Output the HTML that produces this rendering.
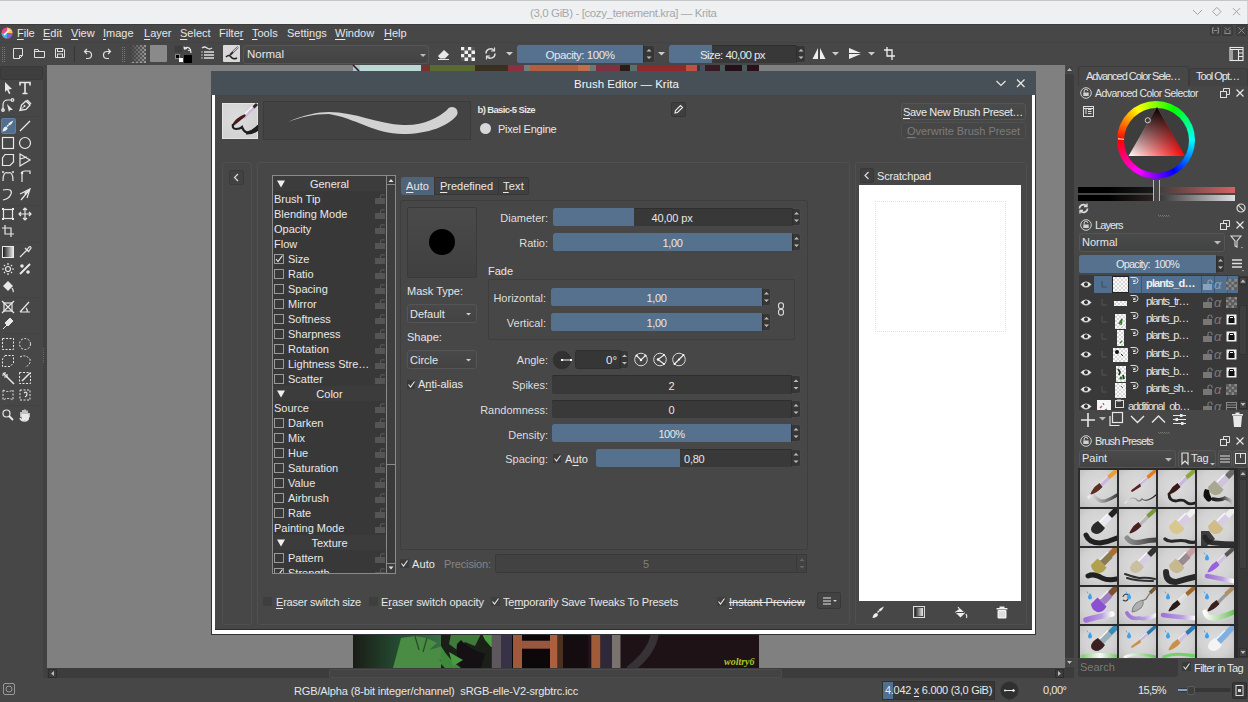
<!DOCTYPE html>
<html><head><meta charset="utf-8"><style>
*{box-sizing:border-box;margin:0;padding:0}
html,body{width:1248px;height:702px;overflow:hidden;background:#3d3d3d;font-family:"Liberation Sans",sans-serif;font-size:11px;color:#d8d8d8}
.a{position:absolute}
.t{position:absolute;white-space:nowrap;line-height:16px}
u{text-decoration:underline;text-underline-offset:1.5px;text-decoration-thickness:1px}
svg{position:absolute;overflow:visible}
svg.clip{overflow:hidden}
</style></head><body>
<div class="a" style="left:0px;top:0px;width:1248px;height:24px;background:#eff0f1;border-top:1px solid #c4c6c8"></div>
<div class="t" style="left:530px;top:4.5px;font-size:11.5px;letter-spacing:-0.380px;color:#a6a8aa">(3,0 GiB) - [cozy_tenement.kra] — Krita</div>
<svg style="left:1190px;top:6px" width="58" height="14" viewBox="0 0 58 14" fill="none" stroke="#a2a4a6" stroke-width="1"><path d="M3 4 L7.5 8.5 L12 4"/><path d="M26.8 1.4 L31 5.6 L26.8 9.8 L22.6 5.6 Z"/><path d="M43 2.2 L50 9.2 M50 2.2 L43 9.2"/></svg>
<div class="a" style="left:1247px;top:1px;width:1px;height:23px;background:#d0d2d4"></div>
<div class="a" style="left:0px;top:24px;width:1248px;height:18px;background:#474747;border-top:1px solid #3c3c3c"></div>
<div class="a" style="left:0px;top:42px;width:1248px;height:23px;background:#474747;border-top:1px solid #434343"></div>
<div class="t" style="left:17px;top:25px;color:#e6e6e6"><u>F</u>ile</div>
<div class="t" style="left:43px;top:25px;color:#e6e6e6"><u>E</u>dit</div>
<div class="t" style="left:71px;top:25px;color:#e6e6e6"><u>V</u>iew</div>
<div class="t" style="left:103px;top:25px;color:#e6e6e6"><u>I</u>mage</div>
<div class="t" style="left:144px;top:25px;color:#e6e6e6"><u>L</u>ayer</div>
<div class="t" style="left:180px;top:25px;color:#e6e6e6"><u>S</u>elect</div>
<div class="t" style="left:219px;top:25px;color:#e6e6e6">Filte<u>r</u></div>
<div class="t" style="left:252px;top:25px;color:#e6e6e6"><u>T</u>ools</div>
<div class="t" style="left:287px;top:25px;color:#e6e6e6">Setti<u>n</u>gs</div>
<div class="t" style="left:335px;top:25px;color:#e6e6e6"><u>W</u>indow</div>
<div class="t" style="left:384px;top:25px;color:#e6e6e6"><u>H</u>elp</div>
<svg style="left:1px;top:27px" width="12" height="12" viewBox="0 0 12 12"><circle cx="6" cy="6" r="5.5" fill="#e84c8a"/><path d="M6 .5 A5.5 5.5 0 0 1 11.5 6 L6 6Z" fill="#f7c94a"/><path d="M.5 6 A5.5 5.5 0 0 0 6 11.5 L6 6Z" fill="#38b6e8"/><path d="M11.5 6 A5.5 5.5 0 0 1 6 11.5 L6 6Z" fill="#8a5cd0"/><path d="M3 8 L8 3" stroke="#fff" stroke-width="1.5"/></svg>
<div class="a" style="left:47px;top:65px;width:1018px;height:603px;background:#808080"></div>
<svg style="left:2px;top:47px" width="3" height="16" viewBox="0 0 3 16" ><rect x="0" y="0" width="1" height="1" fill="#777"/><rect x="2" y="0" width="1" height="1" fill="#777"/><rect x="0" y="2" width="1" height="1" fill="#777"/><rect x="2" y="2" width="1" height="1" fill="#777"/><rect x="0" y="4" width="1" height="1" fill="#777"/><rect x="2" y="4" width="1" height="1" fill="#777"/><rect x="0" y="6" width="1" height="1" fill="#777"/><rect x="2" y="6" width="1" height="1" fill="#777"/><rect x="0" y="8" width="1" height="1" fill="#777"/><rect x="2" y="8" width="1" height="1" fill="#777"/><rect x="0" y="10" width="1" height="1" fill="#777"/><rect x="2" y="10" width="1" height="1" fill="#777"/><rect x="0" y="12" width="1" height="1" fill="#777"/><rect x="2" y="12" width="1" height="1" fill="#777"/><rect x="0" y="14" width="1" height="1" fill="#777"/><rect x="2" y="14" width="1" height="1" fill="#777"/></svg>
<svg style="left:122px;top:47px" width="3" height="16" viewBox="0 0 3 16" ><rect x="0" y="0" width="1" height="1" fill="#777"/><rect x="2" y="0" width="1" height="1" fill="#777"/><rect x="0" y="2" width="1" height="1" fill="#777"/><rect x="2" y="2" width="1" height="1" fill="#777"/><rect x="0" y="4" width="1" height="1" fill="#777"/><rect x="2" y="4" width="1" height="1" fill="#777"/><rect x="0" y="6" width="1" height="1" fill="#777"/><rect x="2" y="6" width="1" height="1" fill="#777"/><rect x="0" y="8" width="1" height="1" fill="#777"/><rect x="2" y="8" width="1" height="1" fill="#777"/><rect x="0" y="10" width="1" height="1" fill="#777"/><rect x="2" y="10" width="1" height="1" fill="#777"/><rect x="0" y="12" width="1" height="1" fill="#777"/><rect x="2" y="12" width="1" height="1" fill="#777"/><rect x="0" y="14" width="1" height="1" fill="#777"/><rect x="2" y="14" width="1" height="1" fill="#777"/></svg>
<svg style="left:12px;top:47px" width="12" height="13" viewBox="0 0 12 13" ><path d="M1.5 1.5 H10.5 V8.5 L7.5 11.5 H1.5 Z M10.5 8.5 H7.5 V11.5" fill="none" stroke="#e0e0e0"/></svg>
<svg style="left:33px;top:47px" width="13" height="12" viewBox="0 0 13 12" ><path d="M1.5 2.5 V10.5 H11.5 V4.5 H6 L5 2.5 Z" fill="none" stroke="#e0e0e0"/><path d="M1.5 4.5 H11.5" stroke="#e0e0e0"/></svg>
<svg style="left:54px;top:47px" width="12" height="12" viewBox="0 0 12 12" ><path d="M1.5 1.5 H9 L10.5 3 V10.5 H1.5 Z" fill="none" stroke="#e0e0e0"/><rect x="3.5" y="1.5" width="5" height="3" fill="none" stroke="#e0e0e0"/><rect x="3.5" y="7" width="5" height="3.5" fill="none" stroke="#e0e0e0"/></svg>
<div class="a" style="left:74px;top:46px;width:1px;height:16px;background:#353535"></div>
<svg style="left:82px;top:47px" width="11" height="13" viewBox="0 0 11 13" ><path d="M3 4.5 H6 A3.5 3.5 0 0 1 6 11.5 H4" fill="none" stroke="#e0e0e0" stroke-width="1.2"/><path d="M5 2 L2.5 4.5 L5 7" fill="none" stroke="#e0e0e0" stroke-width="1.2"/></svg>
<svg style="left:102px;top:47px" width="11" height="13" viewBox="0 0 11 13" ><path d="M8 4.5 H5 A3.5 3.5 0 0 0 5 11.5 H7" fill="none" stroke="#e0e0e0" stroke-width="1.2"/><path d="M6 2 L8.5 4.5 L6 7" fill="none" stroke="#e0e0e0" stroke-width="1.2"/></svg>
<svg style="left:130px;top:45px" width="16" height="17" viewBox="0 0 16 17" ><defs><linearGradient id="cg" x1="0" x2="1"><stop offset="0" stop-color="#3d3d3d" stop-opacity=".9"/><stop offset="1" stop-color="#3d3d3d" stop-opacity="0"/></linearGradient></defs><rect x="0" y="0" width="2" height="2" fill="#5a5a5a"/><rect x="0" y="2" width="2" height="2" fill="#9a9a9a"/><rect x="0" y="4" width="2" height="2" fill="#5a5a5a"/><rect x="0" y="6" width="2" height="2" fill="#9a9a9a"/><rect x="0" y="8" width="2" height="2" fill="#5a5a5a"/><rect x="0" y="10" width="2" height="2" fill="#9a9a9a"/><rect x="0" y="12" width="2" height="2" fill="#5a5a5a"/><rect x="0" y="14" width="2" height="2" fill="#9a9a9a"/><rect x="0" y="16" width="2" height="2" fill="#5a5a5a"/><rect x="2" y="0" width="2" height="2" fill="#9a9a9a"/><rect x="2" y="2" width="2" height="2" fill="#5a5a5a"/><rect x="2" y="4" width="2" height="2" fill="#9a9a9a"/><rect x="2" y="6" width="2" height="2" fill="#5a5a5a"/><rect x="2" y="8" width="2" height="2" fill="#9a9a9a"/><rect x="2" y="10" width="2" height="2" fill="#5a5a5a"/><rect x="2" y="12" width="2" height="2" fill="#9a9a9a"/><rect x="2" y="14" width="2" height="2" fill="#5a5a5a"/><rect x="2" y="16" width="2" height="2" fill="#9a9a9a"/><rect x="4" y="0" width="2" height="2" fill="#5a5a5a"/><rect x="4" y="2" width="2" height="2" fill="#9a9a9a"/><rect x="4" y="4" width="2" height="2" fill="#5a5a5a"/><rect x="4" y="6" width="2" height="2" fill="#9a9a9a"/><rect x="4" y="8" width="2" height="2" fill="#5a5a5a"/><rect x="4" y="10" width="2" height="2" fill="#9a9a9a"/><rect x="4" y="12" width="2" height="2" fill="#5a5a5a"/><rect x="4" y="14" width="2" height="2" fill="#9a9a9a"/><rect x="4" y="16" width="2" height="2" fill="#5a5a5a"/><rect x="6" y="0" width="2" height="2" fill="#9a9a9a"/><rect x="6" y="2" width="2" height="2" fill="#5a5a5a"/><rect x="6" y="4" width="2" height="2" fill="#9a9a9a"/><rect x="6" y="6" width="2" height="2" fill="#5a5a5a"/><rect x="6" y="8" width="2" height="2" fill="#9a9a9a"/><rect x="6" y="10" width="2" height="2" fill="#5a5a5a"/><rect x="6" y="12" width="2" height="2" fill="#9a9a9a"/><rect x="6" y="14" width="2" height="2" fill="#5a5a5a"/><rect x="6" y="16" width="2" height="2" fill="#9a9a9a"/><rect x="8" y="0" width="2" height="2" fill="#5a5a5a"/><rect x="8" y="2" width="2" height="2" fill="#9a9a9a"/><rect x="8" y="4" width="2" height="2" fill="#5a5a5a"/><rect x="8" y="6" width="2" height="2" fill="#9a9a9a"/><rect x="8" y="8" width="2" height="2" fill="#5a5a5a"/><rect x="8" y="10" width="2" height="2" fill="#9a9a9a"/><rect x="8" y="12" width="2" height="2" fill="#5a5a5a"/><rect x="8" y="14" width="2" height="2" fill="#9a9a9a"/><rect x="8" y="16" width="2" height="2" fill="#5a5a5a"/><rect x="10" y="0" width="2" height="2" fill="#9a9a9a"/><rect x="10" y="2" width="2" height="2" fill="#5a5a5a"/><rect x="10" y="4" width="2" height="2" fill="#9a9a9a"/><rect x="10" y="6" width="2" height="2" fill="#5a5a5a"/><rect x="10" y="8" width="2" height="2" fill="#9a9a9a"/><rect x="10" y="10" width="2" height="2" fill="#5a5a5a"/><rect x="10" y="12" width="2" height="2" fill="#9a9a9a"/><rect x="10" y="14" width="2" height="2" fill="#5a5a5a"/><rect x="10" y="16" width="2" height="2" fill="#9a9a9a"/><rect x="12" y="0" width="2" height="2" fill="#5a5a5a"/><rect x="12" y="2" width="2" height="2" fill="#9a9a9a"/><rect x="12" y="4" width="2" height="2" fill="#5a5a5a"/><rect x="12" y="6" width="2" height="2" fill="#9a9a9a"/><rect x="12" y="8" width="2" height="2" fill="#5a5a5a"/><rect x="12" y="10" width="2" height="2" fill="#9a9a9a"/><rect x="12" y="12" width="2" height="2" fill="#5a5a5a"/><rect x="12" y="14" width="2" height="2" fill="#9a9a9a"/><rect x="12" y="16" width="2" height="2" fill="#5a5a5a"/><rect x="14" y="0" width="2" height="2" fill="#9a9a9a"/><rect x="14" y="2" width="2" height="2" fill="#5a5a5a"/><rect x="14" y="4" width="2" height="2" fill="#9a9a9a"/><rect x="14" y="6" width="2" height="2" fill="#5a5a5a"/><rect x="14" y="8" width="2" height="2" fill="#9a9a9a"/><rect x="14" y="10" width="2" height="2" fill="#5a5a5a"/><rect x="14" y="12" width="2" height="2" fill="#9a9a9a"/><rect x="14" y="14" width="2" height="2" fill="#5a5a5a"/><rect x="14" y="16" width="2" height="2" fill="#9a9a9a"/><rect width="16" height="17" fill="url(#cg)"/></svg>
<div class="a" style="left:150px;top:45px;width:17px;height:17px;background:#8a8a8a;border-radius:1px"></div>
<div class="a" style="left:174px;top:45px;width:9px;height:8px;background:#3c3c3c;border:1px solid #444"></div>
<div class="a" style="left:184px;top:55px;width:8px;height:8px;background:#000"></div>
<div class="a" style="left:175px;top:54px;width:5px;height:5px;background:#000;border:1px solid #888"></div>
<div class="a" style="left:179px;top:58px;width:4px;height:4px;background:#fff"></div>
<svg style="left:183px;top:45px" width="9" height="9" viewBox="0 0 9 9" ><path d="M1.5 3.5 Q5 1 7.5 4.5 M1 1.5 L1.5 4 L4 3.5 M8 8 L7.5 5 L5 5.5" stroke="#e8e8e8" fill="none" stroke-width="1.2"/></svg>
<svg style="left:201px;top:46px" width="14" height="14" viewBox="0 0 14 14" ><path d="M1 2 Q3.5 0 6 2 T11 2" stroke="#e0e0e0" fill="none" stroke-width="1.3"/><path d="M3 6 H13 M3 9 H13 M3 12 H13" stroke="#e0e0e0" stroke-width="1.3"/><path d="M0.5 6 H1.5 M.5 9 H1.5 M.5 12 H1.5" stroke="#e0e0e0" stroke-width="1.3"/></svg>
<div class="a" style="left:223px;top:45px;width:17px;height:17px;background:#d9d9d9;border-radius:1px"></div>
<svg style="left:223px;top:45px" width="17" height="17" viewBox="0 0 17 17" ><path d="M15 2 L7 10" stroke="#3a2a2a" stroke-width="2"/><path d="M15 2 L10 7" stroke="#c8b8d8" stroke-width="1.2"/><path d="M3 12 Q6 9 8 12 T14 13" stroke="#222" fill="none" stroke-width="1.5"/></svg>
<div class="a" style="left:243px;top:45px;width:186px;height:19px;background:linear-gradient(#4a4a4a,#434343);border:1px solid #555;border-radius:3px"></div>
<div class="t" style="left:247px;top:46px;color:#e6e6e6;font-size:11.5px">Normal</div>
<svg style="left:420px;top:54px" width="6" height="3" viewBox="0 0 6 3" ><path d="M0 0 H6 L3 3Z" fill="#bbb"/></svg>
<svg style="left:437px;top:47px" width="14" height="13" viewBox="0 0 14 13" ><path d="M1 9 L7 3 L12 7.5 L8 11.5 H3 Z" fill="#e8e8e8"/><path d="M1 12.5 H12" stroke="#e8e8e8"/></svg>
<svg style="left:461px;top:47px" width="14" height="14" viewBox="0 0 14 14" ><rect x="0.0" y="0.0" width="3.5" height="3.5" fill="#f0f0f0"/><rect x="0.0" y="3.5" width="3.5" height="3.5" fill="#555"/><rect x="0.0" y="7.0" width="3.5" height="3.5" fill="#f0f0f0"/><rect x="0.0" y="10.5" width="3.5" height="3.5" fill="#555"/><rect x="3.5" y="0.0" width="3.5" height="3.5" fill="#555"/><rect x="3.5" y="3.5" width="3.5" height="3.5" fill="#f0f0f0"/><rect x="3.5" y="7.0" width="3.5" height="3.5" fill="#555"/><rect x="3.5" y="10.5" width="3.5" height="3.5" fill="#f0f0f0"/><rect x="7.0" y="0.0" width="3.5" height="3.5" fill="#f0f0f0"/><rect x="7.0" y="3.5" width="3.5" height="3.5" fill="#555"/><rect x="7.0" y="7.0" width="3.5" height="3.5" fill="#f0f0f0"/><rect x="7.0" y="10.5" width="3.5" height="3.5" fill="#555"/><rect x="10.5" y="0.0" width="3.5" height="3.5" fill="#555"/><rect x="10.5" y="3.5" width="3.5" height="3.5" fill="#f0f0f0"/><rect x="10.5" y="7.0" width="3.5" height="3.5" fill="#555"/><rect x="10.5" y="10.5" width="3.5" height="3.5" fill="#f0f0f0"/></svg>
<svg style="left:484px;top:47px" width="13" height="13" viewBox="0 0 13 13" ><path d="M2 6.5 A4.5 4.5 0 0 1 10 3.5 M11 6.5 A4.5 4.5 0 0 1 3 9.5" stroke="#e0e0e0" fill="none" stroke-width="1.4"/><path d="M10.5 0.5 V4 H7" stroke="#e0e0e0" fill="none" stroke-width="1.2"/><path d="M2.5 12.5 V9 H6" stroke="#e0e0e0" fill="none" stroke-width="1.2"/></svg>
<svg style="left:506px;top:52px" width="7" height="4" viewBox="0 0 7 4" ><path d="M0 0 H7 L3.5 3.5Z" fill="#ccc"/></svg>
<div class="a" style="left:517px;top:45px;width:126px;height:18px;background:#383838;border-radius:2px 0 0 2px;box-shadow:inset 0 1px 0 #2e2e2e"></div>
<div class="a" style="left:517px;top:45px;width:126px;height:18px;background:#56718d;border-radius:2px 0 0 2px"></div>
<div class="t" style="left:517px;top:47.0px;width:126px;text-align:center;color:#e8e8e8;font-size:11.5px;letter-spacing:-0.445px">Opacity: 100%</div>
<div class="a" style="left:643px;top:45px;width:12px;height:18px;background:#363636;border:1px solid #4a4a4a;border-left:1px solid #2e2e2e;border-radius:0 3px 3px 0"></div>
<svg style="left:643px;top:45px" width="12" height="18" viewBox="0 0 12 18" ><path d="M3.5 6.4 L6.0 3.9000000000000004 L8.5 6.4Z" fill="#bdbdbd"/><path d="M3.5 11.600000000000001 L6.0 14.100000000000001 L8.5 11.600000000000001Z" fill="#bdbdbd"/></svg>
<svg style="left:658px;top:52px" width="7" height="4" viewBox="0 0 7 4" ><path d="M0 0 H7 L3.5 3.5Z" fill="#ccc"/></svg>
<div class="a" style="left:669px;top:45px;width:127px;height:18px;background:#383838;border-radius:2px 0 0 2px;box-shadow:inset 0 1px 0 #2e2e2e"></div>
<div class="a" style="left:669px;top:45px;width:43px;height:18px;background:#56718d;border-radius:2px 0 0 2px"></div>
<div class="t" style="left:700px;top:47.0px;color:#e8e8e8;font-size:11.5px;letter-spacing:-0.563px">Size: 40,00 px</div>
<div class="a" style="left:796px;top:45px;width:10px;height:18px;background:#363636;border:1px solid #4a4a4a;border-left:1px solid #2e2e2e;border-radius:0 3px 3px 0"></div>
<svg style="left:796px;top:45px" width="10" height="18" viewBox="0 0 10 18" ><path d="M2.5 6.4 L5.0 3.9000000000000004 L7.5 6.4Z" fill="#bdbdbd"/><path d="M2.5 11.600000000000001 L5.0 14.100000000000001 L7.5 11.600000000000001Z" fill="#bdbdbd"/></svg>
<svg style="left:812px;top:47px" width="14" height="13" viewBox="0 0 14 13" ><path d="M6 1 V12 H0.5 Z M8 1 V12 H13.5 Z" fill="#eee"/></svg>
<svg style="left:832px;top:52px" width="7" height="4" viewBox="0 0 7 4" ><path d="M0 0 H7 L3.5 3.5Z" fill="#ccc"/></svg>
<svg style="left:848px;top:47px" width="14" height="13" viewBox="0 0 14 13" ><path d="M1 1 L13 6 H1 Z M1 7 H13 L1 12Z" fill="#eee"/></svg>
<svg style="left:868px;top:52px" width="7" height="4" viewBox="0 0 7 4" ><path d="M0 0 H7 L3.5 3.5Z" fill="#ccc"/></svg>
<svg style="left:883px;top:46px" width="13" height="15" viewBox="0 0 13 15" ><path d="M4 1 V10 H12 M1 4 H9 V14" stroke="#eee" fill="none" stroke-width="1.3"/></svg>
<svg style="left:1229px;top:46px" width="15" height="15" viewBox="0 0 15 15" ><rect x="1" y="1.5" width="13" height="13" fill="none" stroke="#e8e8e8" stroke-width="1.1"/><path d="M1 3.5 H14 M3 3.5 V14.5 M9.5 3.5 V14.5 M9.5 7 H14 M9.5 10.5 H14" stroke="#e8e8e8" stroke-width="1.1"/></svg>
<div class="a" style="left:1210px;top:25px;width:11px;height:11px;border:1px solid #3a3a3a;border-radius:2px;background:#414141"></div>
<div class="a" style="left:1222px;top:25px;width:11px;height:11px;border:1px solid #3a3a3a;border-radius:2px;background:#414141"></div>
<div class="a" style="left:1236px;top:25px;width:11px;height:11px;border:1px solid #3a3a3a;border-radius:2px;background:#414141"></div>
<svg style="left:1210px;top:25px" width="38" height="11" viewBox="0 0 38 11" ><path d="M2.5 3 V8 M8.5 3 V8 M3.5 5.5 H7.5 M2.5 3 H4 M7 3 H8.5 M2.5 8 H4 M7 8 H8.5" stroke="#8a8a8a"/><path d="M14.5 8.5 H20.5 M15 2.5 L17.5 5 M20 2.5 L17.5 5 M15 5 V8.5 M20 5 V8.5" stroke="#8a8a8a" fill="none"/><path d="M28.5 2.5 L34.5 8.5 M34.5 2.5 L28.5 8.5" stroke="#8a8a8a"/></svg>
<div class="a" style="left:0px;top:65px;width:43px;height:615px;background:#474747"></div>
<div class="a" style="left:43px;top:65px;width:4px;height:615px;background:#414141"></div>
<div class="a" style="left:0px;top:66px;width:43px;height:14px;background:#3e3e3e;border:1px solid #383838;border-radius:2px"></div>
<div class="a" style="left:1px;top:118px;width:15px;height:16px;background:#51708f;border:1px solid #5d7ea0;border-radius:2px"></div>
<svg style="left:0px;top:80px" width="16" height="16" viewBox="-8 -8 16 16"><path d="M-3 -6 L4 1 L0.5 1.5 L2.5 5.5 L1 6 L-1 2 L-3 4 Z" fill="#e8e8e8"/></svg>
<svg style="left:17px;top:80px" width="16" height="16" viewBox="-8 -8 16 16"><path d="M-5 -2.5 V-5.5 H5 V-2.5 M0 -5.5 V5.5 M-2.5 5.5 H2.5" stroke="#e8e8e8" fill="none" stroke-width="1.6"/></svg>
<svg style="left:0px;top:97px" width="16" height="16" viewBox="-8 -8 16 16"><path d="M-5 6 V0 Q-5 -5 0 -5 H4" stroke="#e8e8e8" fill="none" stroke-width="1.2"/><circle cx="4.5" cy="-5" r="1.3" stroke="#e8e8e8" fill="none" stroke-width="1.2"/><circle cx="-5" cy="5" r="1.3" stroke="#e8e8e8" fill="none" stroke-width="1.2"/><path d="M-1 -1 L5 5 L2 5 L1 7Z" fill="#e8e8e8"/></svg>
<svg style="left:17px;top:97px" width="16" height="16" viewBox="-8 -8 16 16"><path d="M-5 5.5 L-3.5 0 L1 -4 L5 0 L1 4.5 Z" fill="none" stroke="#e8e8e8" stroke-width="1.3"/><path d="M-5 5.5 L-1 1.5" stroke="#e8e8e8"/><circle cx="-0.5" cy="1" r="1" fill="#e8e8e8"/><path d="M2 -5 L6 -1" stroke="#e8e8e8" stroke-width="1.5"/></svg>
<svg style="left:17px;top:118px" width="16" height="16" viewBox="-8 -8 16 16"><path d="M-5 5 L5 -5" stroke="#e8e8e8" stroke-width="1.3"/></svg>
<svg style="left:0px;top:135px" width="16" height="16" viewBox="-8 -8 16 16"><rect x="-5.5" y="-5.5" width="11" height="11" stroke="#e8e8e8" fill="none" stroke-width="1.2"/></svg>
<svg style="left:17px;top:135px" width="16" height="16" viewBox="-8 -8 16 16"><circle r="5.5" stroke="#e8e8e8" fill="none" stroke-width="1.2"/></svg>
<svg style="left:0px;top:152px" width="16" height="16" viewBox="-8 -8 16 16"><path d="M-3 -5.5 H5.5 V2 L2 5.5 H-5.5 V-2 Z" stroke="#e8e8e8" fill="none" stroke-width="1.2"/></svg>
<svg style="left:17px;top:152px" width="16" height="16" viewBox="-8 -8 16 16"><path d="M-5 -6 L5 0 L-5 6 Z M-5 -1 L2 -3" stroke="#e8e8e8" fill="none" stroke-width="1.2"/></svg>
<svg style="left:0px;top:168px" width="16" height="16" viewBox="-8 -8 16 16"><path d="M-5 5 Q-5 -5 0 -3 Q5 -5 5 5" stroke="#e8e8e8" fill="none" stroke-width="1.2"/><circle cx="-5" cy="-4" r="1" fill="#e8e8e8"/><circle cx="5" cy="-4" r="1" fill="#e8e8e8"/></svg>
<svg style="left:17px;top:168px" width="16" height="16" viewBox="-8 -8 16 16"><path d="M-3 6 V-3 Q-3 -5 0 -5 H5 V-2" stroke="#e8e8e8" fill="none" stroke-width="1.2"/><circle cx="-3" cy="-3" r="1.3" fill="#e8e8e8"/></svg>
<svg style="left:0px;top:186px" width="16" height="16" viewBox="-8 -8 16 16"><path d="M-5 -4 Q5 -6 3 0 Q1 5 -5 6" stroke="#e8e8e8" fill="none" stroke-width="1.2"/></svg>
<svg style="left:17px;top:186px" width="16" height="16" viewBox="-8 -8 16 16"><path d="M-4 6 L5 -5 M-5 0 L5 -5 L2 4" stroke="#e8e8e8" fill="none" stroke-width="1.2"/><path d="M-1 -1 L3 -4 L1 1Z" fill="#e8e8e8"/></svg>
<svg style="left:0px;top:206px" width="16" height="16" viewBox="-8 -8 16 16"><rect x="-4.5" y="-4.5" width="9" height="9" stroke="#e8e8e8" fill="none" stroke-width="1.2"/><path d="M-6 -6 h2 v2 h-2z M4 -6 h2 v2 h-2z M-6 4 h2 v2 h-2z M4 4 h2 v2 h-2z" fill="#e8e8e8"/></svg>
<svg style="left:17px;top:206px" width="16" height="16" viewBox="-8 -8 16 16"><path d="M0 -6 V6 M-6 0 H6 M-2 -4 L0 -6 L2 -4 M-2 4 L0 6 L2 4 M-4 -2 L-6 0 L-4 2 M4 -2 L6 0 L4 2" stroke="#e8e8e8" fill="none" stroke-width="1.2"/></svg>
<svg style="left:0px;top:223px" width="16" height="16" viewBox="-8 -8 16 16"><path d="M-3 -6 V3 H6 M-6 -3 H3 V6" stroke="#e8e8e8" fill="none" stroke-width="1.2"/></svg>
<svg style="left:0px;top:244px" width="16" height="16" viewBox="-8 -8 16 16"><defs><linearGradient id="gr1"><stop offset="0" stop-color="#111"/><stop offset="1" stop-color="#eee"/></linearGradient></defs><rect x="-5.5" y="-5.5" width="11" height="11" fill="url(#gr1)" stroke="#e8e8e8"/></svg>
<svg style="left:17px;top:244px" width="16" height="16" viewBox="-8 -8 16 16"><path d="M-5 5 L2 -2 M0 -4 L4 0 M2 -2 L4 -5 Q6 -6 6 -4 L4 -1" stroke="#e8e8e8" fill="none" stroke-width="1.2"/></svg>
<svg style="left:0px;top:261px" width="16" height="16" viewBox="-8 -8 16 16"><circle r="2.5" stroke="#e8e8e8" fill="none" stroke-width="1.2"/><path d="M0 -6 V-4 M0 4 V6 M-6 0 H-4 M4 0 H6 M-4 -4 L-3 -3 M3 3 L4 4 M-4 4 L-3 3 M3 -3 L4 -4" stroke="#e8e8e8" fill="none" stroke-width="1.2"/></svg>
<svg style="left:17px;top:261px" width="16" height="16" viewBox="-8 -8 16 16"><path d="M-5 5 L5 -5" stroke="#e8e8e8" stroke-width="2"/><circle cx="-3" cy="-3" r="1.8" fill="#e8e8e8"/><circle cx="3" cy="3" r="1.8" fill="#e8e8e8"/></svg>
<svg style="left:0px;top:278px" width="16" height="16" viewBox="-8 -8 16 16"><path d="M-5 0 L0 -5 L5 0 L0 5Z" fill="#e8e8e8"/><path d="M4 2 Q6 5 5 6" stroke="#e8e8e8" fill="none" stroke-width="1.2"/></svg>
<svg style="left:0px;top:299px" width="16" height="16" viewBox="-8 -8 16 16"><rect x="-4" y="-4" width="8" height="8" stroke="#e8e8e8" fill="none" stroke-width="1.2"/><path d="M-6 -6 L6 6 M6 -6 L-6 6" stroke="#e8e8e8" fill="none" stroke-width="1.2"/></svg>
<svg style="left:17px;top:299px" width="16" height="16" viewBox="-8 -8 16 16"><path d="M-5 5 H5 M-5 5 L4 -5 M1 1 Q3 3 2 5" stroke="#e8e8e8" fill="none" stroke-width="1.2"/></svg>
<svg style="left:0px;top:315px" width="16" height="16" viewBox="-8 -8 16 16"><path d="M-5 6 L-1 2 M-3 0 L2 -5 L5 -2 L0 3 Z" fill="#e8e8e8" stroke="#e8e8e8"/></svg>
<svg style="left:0px;top:336px" width="16" height="16" viewBox="-8 -8 16 16"><rect x="-5.5" y="-5.5" width="11" height="11" stroke="#e8e8e8" fill="none" stroke-dasharray="2 1.5"/></svg>
<svg style="left:17px;top:336px" width="16" height="16" viewBox="-8 -8 16 16"><circle r="5.5" stroke="#e8e8e8" fill="none" stroke-dasharray="2 1.5"/></svg>
<svg style="left:0px;top:353px" width="16" height="16" viewBox="-8 -8 16 16"><path d="M-3 -5.5 H5.5 V2 L2 5.5 H-5.5 V-2 Z" stroke="#e8e8e8" fill="none" stroke-dasharray="2 1.5"/></svg>
<svg style="left:17px;top:353px" width="16" height="16" viewBox="-8 -8 16 16"><path d="M-5 -4 Q0 -7 5 -2 Q6 4 0 6" stroke="#e8e8e8" fill="none" stroke-dasharray="2 1.5"/></svg>
<svg style="left:0px;top:370px" width="16" height="16" viewBox="-8 -8 16 16"><path d="M-5 -5 L6 6" stroke="#e8e8e8" stroke-width="1.5"/><path d="M-4 -1 H-1 V-4 M-3 -6 V-4 M-6 -3 H-4" stroke="#e8e8e8" fill="none" stroke-width="1.2"/></svg>
<svg style="left:17px;top:370px" width="16" height="16" viewBox="-8 -8 16 16"><rect x="-5.5" y="-5.5" width="11" height="11" stroke="#e8e8e8" fill="none" stroke-dasharray="2 1.5"/><path d="M-3 3 L3 -3 L5 -5" stroke="#e8e8e8" stroke-width="1.5"/></svg>
<svg style="left:0px;top:387px" width="16" height="16" viewBox="-8 -8 16 16"><path d="M-5 -5 Q0 -2 5 -5 V5 Q0 2 -5 5Z" stroke="#e8e8e8" fill="none" stroke-dasharray="2 1.5"/></svg>
<svg style="left:17px;top:387px" width="16" height="16" viewBox="-8 -8 16 16"><path d="M-5 -5 H5 V5 H-5Z" stroke="#e8e8e8" fill="none" stroke-dasharray="2 1.5"/><path d="M-1 -2 Q2 -4 2 -1 Q2 1 0 2" stroke="#e8e8e8" fill="none" stroke-width="1.2"/></svg>
<svg style="left:0px;top:407px" width="16" height="16" viewBox="-8 -8 16 16"><circle cx="-1.5" cy="-1.5" r="3.5" stroke="#e8e8e8" fill="none" stroke-width="1.2"/><path d="M1 1 L5 5" stroke="#e8e8e8" stroke-width="2"/></svg>
<svg style="left:17px;top:407px" width="16" height="16" viewBox="-8 -8 16 16"><path d="M-4 2 V-3 M-2 1 V-5 M0 1 V-5.5 M2 1 V-4.5 M4 2 V-2 Q4 6 0 6 Q-4 6 -5 3" stroke="#e8e8e8" stroke-width="1.5" fill="none"/><rect x="-3.5" y="-1" width="7" height="6" fill="#e8e8e8"/></svg>
<svg style="left:0px;top:118px" width="16" height="16" viewBox="0 0 16 16"><path d="M13.5 2.5 Q12 6 9.5 7.5 L8 6 Q10 3.5 13.5 2.5Z" fill="#eee"/><path d="M8.5 7 L7 8.5" stroke="#eee" stroke-width="1.5"/><path d="M2.5 13.5 Q3 9.5 5.5 8.5 Q7.5 8.5 7.5 10.5 Q6.5 13 2.5 13.5Z" fill="#eee"/></svg>
<div class="a" style="left:3px;top:116px;width:36px;height:1px;background:#424242"></div>
<div class="a" style="left:3px;top:205px;width:36px;height:1px;background:#424242"></div>
<div class="a" style="left:3px;top:242px;width:36px;height:1px;background:#424242"></div>
<div class="a" style="left:3px;top:297px;width:36px;height:1px;background:#424242"></div>
<div class="a" style="left:3px;top:333px;width:36px;height:1px;background:#424242"></div>
<div class="a" style="left:3px;top:405px;width:36px;height:1px;background:#424242"></div>
<svg style="left:43px;top:348px" width="2" height="16" viewBox="0 0 2 16" ><rect y="0" width="1" height="1" fill="#666"/><rect y="2" width="1" height="1" fill="#666"/><rect y="4" width="1" height="1" fill="#666"/><rect y="6" width="1" height="1" fill="#666"/><rect y="8" width="1" height="1" fill="#666"/><rect y="10" width="1" height="1" fill="#666"/><rect y="12" width="1" height="1" fill="#666"/><rect y="14" width="1" height="1" fill="#666"/></svg>
<div class="a" style="left:353px;top:65px;width:406px;height:6px;background:linear-gradient(90deg,#a8c8d0 0px 7px,#bcd8d4 7px 68px,#7a3030 68px 77px,#5a6a30 77px 122px,#3a3020 122px 155px,#8a3040 155px 171px,#708080 171px 177px,#b06040 177px 225px,#c07048 225px 237px,#6a7878 237px 243px,#803040 243px 267px,#2a1a1a 267px 277px,#5a7070 277px 284px,#902a2a 284px 333px,#c05040 333px 344px,#2a3a50 344px 347px,#4a5060 347px 352px,#3a1a22 352px 367px,#4a5a5a 367px 372px,#25101a 372px 389px,#4a5a5a 389px 394px,#2a101a 394px 406px)"></div>
<svg style="left:353px;top:65px" width="10" height="6" viewBox="0 0 10 6" ><path d="M0 0 L6 6" stroke="#3a1020" stroke-width="1.6"/></svg>
<svg style="left:353px;top:634px" width="406" height="34" viewBox="0 0 406 34" ><defs><linearGradient id="pg1" x1="0" x2="1"><stop offset="0" stop-color="#1a1c16"/><stop offset=".5" stop-color="#244a30"/><stop offset="1" stop-color="#3a6e44"/></linearGradient>
<linearGradient id="pg2" x1="0" x2="1"><stop offset="0" stop-color="#261418"/><stop offset="1" stop-color="#1e1216"/></linearGradient></defs>
<rect width="406" height="34" fill="url(#pg2)"/>
<rect x="0" y="0" width="88" height="34" fill="url(#pg1)"/>
<path d="M40 34 L48 4 L62 2 L74 4 L84 9 L76 16 L90 12 L96 22 L86 26 L94 34 Z" fill="#4a8c44"/>
<path d="M62 2 L66 16 M74 4 L70 18" stroke="#2a4a2a" stroke-width="1.2"/>
<rect x="88" y="0" width="50" height="34" fill="#1a2018"/>
<path d="M98 0 L128 0 L122 12 L112 8 L104 16 L96 10 Z" fill="#3f7a3a"/>
<path d="M108 6 Q114 14 132 20 L128 34 L108 34 Q102 20 104 10Z" fill="#141014"/>
<path d="M88 12 Q96 26 108 34 L92 34 L88 30Z" fill="#3f8a3a"/>
<path d="M96 18 L110 26 L100 32Z" fill="#4a9a40"/>
<path d="M129 0 L155 0 L150 10 L138 13 L132 6Z" fill="#4aa040"/>
<rect x="138.7" y="0" width="9.3" height="34" fill="#5e585e"/>
<rect x="148" y="0" width="11" height="34" fill="#383248"/>
<rect x="159" y="0" width="1" height="34" fill="#0c0808"/>
<rect x="160" y="0" width="9" height="34" fill="#a2583a"/>
<rect x="169" y="0" width="28" height="34" fill="#0c0708"/>
<rect x="169" y="6.7" width="28" height="8" fill="#9a5640"/>
<rect x="197" y="0" width="7.6" height="34" fill="#ad6040"/>
<rect x="204.6" y="0" width="5.4" height="34" fill="#4a3020"/>
<rect x="210" y="0" width="25" height="34" fill="#140c0e"/>
<rect x="238.3" y="0" width="9.2" height="34" fill="#a05c38"/>
<rect x="247.5" y="0" width="11.5" height="34" fill="#2e2838"/>
<rect x="259" y="0" width="8.7" height="34" fill="#78736e"/>
<rect x="267.7" y="0" width="138.3" height="34" fill="#1e1216"/>
<path d="M302 -2 Q300 18 276 36" stroke="#363236" stroke-width="8" fill="none"/>
<text x="371" y="31" font-size="10" fill="#a8c828" font-family="Liberation Serif" font-style="italic" font-weight="bold">woltry6</text></svg>
<div class="a" style="left:1065px;top:65px;width:9px;height:603px;background:#3b3b3b"></div>
<div class="a" style="left:1065px;top:65px;width:9px;height:9px;background:#434343;border:1px solid #4a4a4a"></div>
<svg style="left:1065px;top:65px" width="9" height="9" viewBox="0 0 9 9" ><path d="M2 6 L4.5 3 L7 6Z" fill="#bbb"/></svg>
<div class="a" style="left:1065px;top:658px;width:9px;height:9px;background:#434343;border:1px solid #4a4a4a"></div>
<svg style="left:1065px;top:658px" width="9" height="9" viewBox="0 0 9 9" ><path d="M2 3 L4.5 6 L7 3Z" fill="#bbb"/></svg>
<div class="a" style="left:47px;top:668px;width:1029px;height:10px;background:#3c3c3c"></div>
<div class="a" style="left:48px;top:669px;width:9px;height:9px;background:#3c3c3c;border:1px solid #2e2e2e"></div>
<svg style="left:48px;top:669px" width="9" height="9" viewBox="0 0 9 9" ><path d="M6 2 L3 4.5 L6 7Z" fill="#bbb"/></svg>
<div class="a" style="left:1055px;top:669px;width:9px;height:9px;background:#3c3c3c;border:1px solid #2e2e2e"></div>
<svg style="left:1055px;top:669px" width="9" height="9" viewBox="0 0 9 9" ><path d="M3 2 L6 4.5 L3 7Z" fill="#bbb"/></svg>
<div class="a" style="left:329px;top:669px;width:453px;height:9px;background:#434343;border:1px solid #4c4c4c;border-radius:2px"></div>
<div class="a" style="left:0px;top:678px;width:1248px;height:24px;background:#474747"></div>
<svg style="left:3px;top:683px" width="12" height="12" viewBox="0 0 12 12" ><rect x="0.5" y="0.5" width="11" height="11" rx="1.5" fill="none" stroke="#999"/><circle cx="6" cy="6" r="3" fill="none" stroke="#999"/></svg>
<div class="t" style="left:294px;top:682.5px;font-size:11px;letter-spacing:-0.139px;color:#e6e6e6">RGB/Alpha (8-bit integer/channel)&nbsp; sRGB-elle-V2-srgbtrc.icc</div>
<div class="a" style="left:882px;top:681px;width:113px;height:19px;background:#373737;border:1px solid #303030"></div>
<div class="a" style="left:883px;top:682px;width:10px;height:17px;background:#51708f"></div>
<div class="t" style="left:885px;top:682px;font-size:11px;letter-spacing:-0.293px;color:#e8e8e8">4.042 <u>x</u> 6.000 (3,0 GiB)</div>
<svg style="left:1000px;top:681px" width="19" height="19" viewBox="0 0 19 19" ><circle cx="9.5" cy="9.5" r="9" fill="#303030"/><circle cx="9.5" cy="9.5" r="8.5" fill="none" stroke="#3a3a3a" stroke-dasharray="1 1"/><path d="M5.5 9.5 H13.5" stroke="#eee" stroke-width="1"/><circle cx="13.5" cy="9.5" r="1.2" fill="#fff"/><circle cx="5" cy="9.5" r=".9" fill="#fff"/></svg>
<div class="t" style="left:1043px;top:682px;font-size:11px;letter-spacing:-0.461px;color:#e8e8e8">0,00°</div>
<div class="t" style="left:1138px;top:682px;font-size:11px;letter-spacing:-0.638px;color:#e8e8e8">15,5%</div>
<div class="a" style="left:1178px;top:688px;width:53px;height:4px;background:#363636;border-radius:2px"></div>
<div class="a" style="left:1178px;top:689px;width:10px;height:2px;background:#7aa4cf"></div>
<div class="a" style="left:1187px;top:686px;width:8px;height:9px;background:#3e3e3e;border:1px solid #5a5a5a;border-radius:2px"></div>
<div class="a" style="left:1232px;top:682px;width:15px;height:17px;background:#383838;border:1px solid #2e2e2e;border-radius:2px"></div>
<svg style="left:1232px;top:682px" width="15" height="17" viewBox="0 0 15 17" ><rect x="4" y="3.5" width="7" height="10" fill="none" stroke="#ddd"/><rect x="6" y="7" width="3" height="3" fill="#ddd"/></svg>
<div class="a" style="left:1074px;top:65px;width:174px;height:613px;background:#474747"></div>
<div class="a" style="left:1189px;top:68px;width:59px;height:18px;background:#434343;border:1px solid #3c3c3c;border-bottom:none;border-radius:3px 3px 0 0"></div>
<div class="a" style="left:1078px;top:66px;width:111px;height:20px;background:#474747;border:1px solid #3c3c3c;border-bottom:none;border-radius:3px 3px 0 0"></div>
<div class="t" style="left:1086px;top:68px;font-size:11px;letter-spacing:-1.017px;color:#e8e8e8">Advanced Color Sele…</div>
<div class="t" style="left:1196px;top:68px;font-size:11px;letter-spacing:-0.996px;color:#e8e8e8">Tool Opt…</div>
<svg style="left:1080px;top:87px" width="12" height="12" viewBox="0 0 12 12" ><circle cx="6" cy="6" r="5.3" fill="none" stroke="#d0d0d0" stroke-width="1"/><rect x="3.3" y="5.5" width="5.4" height="3.5" fill="#d0d0d0"/><path d="M4.2 5.5 V4 A1.8 1.8 0 0 1 7.8 4" fill="none" stroke="#d0d0d0"/></svg>
<div class="t" style="left:1095px;top:85px;font-size:10.5px;letter-spacing:-0.571px;color:#e6e6e6">Advanced Color Selector</div>
<svg style="left:1220px;top:88px" width="25" height="11" viewBox="0 0 25 11" ><rect x="0.5" y="3.5" width="6" height="6" fill="none" stroke="#e0e0e0"/><path d="M3.5 3.5 V0.5 H9.5 V6.5 H6.5" fill="none" stroke="#e0e0e0"/><path d="M16.5 1.5 L23.5 8.5 M23.5 1.5 L16.5 8.5" stroke="#e8e8e8" stroke-width="1.2"/></svg>
<svg style="left:1083px;top:106px" width="11" height="11" viewBox="0 0 11 11" ><rect x="0.5" y="0.5" width="10" height="10" fill="none" stroke="#ddd"/><path d="M3 3 V8 M5 3.5 H8.5 M5 5.5 H8.5 M5 7.5 H8.5 M1 2.5 H10" stroke="#ddd"/></svg>
<div class="a" style="left:1117px;top:101px;width:78px;height:78px;border-radius:50%;background:conic-gradient(from 0deg,#80ff00 0deg,#00ff00 30deg,#00ffff 90deg,#0000ff 150deg,#ff00ff 210deg,#ff0000 270deg,#ffff00 330deg,#80ff00 360deg)"></div>
<div class="a" style="left:1123.5px;top:107.5px;width:65px;height:65px;border-radius:50%;background:#3d3d3d"></div>
<svg style="left:1117px;top:101px" width="78" height="78" viewBox="0 0 78 78"><defs>
<linearGradient id="tw" x1="0.5" y1="0" x2="0.5" y2="1"><stop offset="0" stop-color="#000"/><stop offset="1" stop-color="#000" stop-opacity="0"/></linearGradient>
<linearGradient id="tr" x1="0" y1="1" x2="1" y2="1"><stop offset="0" stop-color="#fff"/><stop offset="1" stop-color="#ff0000"/></linearGradient></defs>
<path d="M40 6 L11.5 55 L68 55 Z" fill="url(#tr)"/><path d="M40 6 L11.5 55 L68 55 Z" fill="url(#tw)"/>
<circle cx="30.8" cy="19.3" r="2.6" fill="none" stroke="#ccc" stroke-width="1"/>
<path d="M1 37.8 L7 38.3" stroke="#fff" stroke-width="1"/></svg>
<div class="a" style="left:1078px;top:187px;width:75px;height:6px;background:linear-gradient(90deg,#000 0,#000 40%,#1a1a1a 100%)"></div>
<div class="a" style="left:1160px;top:187px;width:75px;height:6px;background:linear-gradient(90deg,#473d3d 0,#d46262 100%)"></div>
<div class="a" style="left:1078px;top:195px;width:75px;height:6px;background:linear-gradient(90deg,#000 0,#000 40%,#2b2222 100%)"></div>
<div class="a" style="left:1160px;top:195px;width:75px;height:6px;background:linear-gradient(90deg,#3a3a3a 0,#dedede 100%)"></div>
<div class="a" style="left:1153px;top:180px;width:1px;height:21px;background:#bbb"></div>
<div class="a" style="left:1159px;top:180px;width:1px;height:21px;background:#bbb"></div>
<svg style="left:1078px;top:203px" width="11" height="11" viewBox="0 0 11 11" ><path d="M1.5 5.5 A4 4 0 0 1 8.5 3 M9.5 5.5 A4 4 0 0 1 2.5 8" stroke="#ddd" fill="none" stroke-width="1.6"/><path d="M9 0.5 V3.5 H6 M2 10.5 V7.5 H5" stroke="#ddd" fill="none" stroke-width="1.3"/></svg>
<svg style="left:1236px;top:203px" width="10" height="10" viewBox="0 0 10 10" ><circle cx="5" cy="5" r="4" fill="none" stroke="#ddd" stroke-width="1.2"/><path d="M2.2 2.2 L7.8 7.8" stroke="#ddd" stroke-width="1.2"/></svg>
<svg style="left:1158px;top:215px" width="12" height="2" viewBox="0 0 12 2" ><rect x="0" width="1" height="1" fill="#777"/><rect x="1" y="1" width="1" height="1" fill="#666"/><rect x="2" width="1" height="1" fill="#777"/><rect x="3" y="1" width="1" height="1" fill="#666"/><rect x="4" width="1" height="1" fill="#777"/><rect x="5" y="1" width="1" height="1" fill="#666"/><rect x="6" width="1" height="1" fill="#777"/><rect x="7" y="1" width="1" height="1" fill="#666"/><rect x="8" width="1" height="1" fill="#777"/><rect x="9" y="1" width="1" height="1" fill="#666"/><rect x="10" width="1" height="1" fill="#777"/><rect x="11" y="1" width="1" height="1" fill="#666"/></svg>
<svg style="left:1080px;top:219px" width="12" height="12" viewBox="0 0 12 12" ><circle cx="6" cy="6" r="5.3" fill="none" stroke="#d0d0d0" stroke-width="1"/><rect x="3.3" y="5.5" width="5.4" height="3.5" fill="#d0d0d0"/><path d="M4.2 5.5 V4 A1.8 1.8 0 0 1 7.8 4" fill="none" stroke="#d0d0d0"/></svg>
<div class="t" style="left:1095px;top:216.5px;font-size:11px;letter-spacing:-0.902px;color:#e6e6e6">Layers</div>
<svg style="left:1220px;top:220px" width="25" height="11" viewBox="0 0 25 11" ><rect x="0.5" y="3.5" width="6" height="6" fill="none" stroke="#e0e0e0"/><path d="M3.5 3.5 V0.5 H9.5 V6.5 H6.5" fill="none" stroke="#e0e0e0"/><path d="M16.5 1.5 L23.5 8.5 M23.5 1.5 L16.5 8.5" stroke="#e8e8e8" stroke-width="1.2"/></svg>
<div class="a" style="left:1079px;top:233px;width:146px;height:19px;background:linear-gradient(#4a4a4a,#434343);border:1px solid #555;border-radius:3px"></div>
<div class="t" style="left:1082px;top:234px;color:#e6e6e6;font-size:11px">Normal</div>
<svg style="left:1214px;top:241px" width="7" height="4" viewBox="0 0 7 4" ><path d="M0 0 H7 L3.5 3.5Z" fill="#bbb"/></svg>
<svg style="left:1230px;top:235px" width="14" height="15" viewBox="0 0 14 15" ><path d="M1 1 H11 L7 6 V12 L5 11 V6 Z" fill="none" stroke="#ddd" stroke-width="1.1"/><path d="M11 12 L13 12 L12 13.5Z" fill="#bbb"/></svg>
<div class="a" style="left:1079px;top:255px;width:137px;height:18px;background:#383838;border-radius:2px 0 0 2px;box-shadow:inset 0 1px 0 #2e2e2e"></div>
<div class="a" style="left:1079px;top:255px;width:137px;height:18px;background:#56718d;border-radius:2px 0 0 2px"></div>
<div class="t" style="left:1079px;top:255.5px;width:137px;text-align:center;color:#e8e8e8;font-size:11px;letter-spacing:-0.828px">Opacity:&nbsp; 100%</div>
<div class="a" style="left:1216px;top:255px;width:9px;height:18px;background:#363636;border:1px solid #4a4a4a;border-left:1px solid #2e2e2e;border-radius:0 3px 3px 0"></div>
<svg style="left:1216px;top:255px" width="9" height="18" viewBox="0 0 9 18" ><path d="M2.0 6.4 L4.5 3.9000000000000004 L7.0 6.4Z" fill="#bdbdbd"/><path d="M2.0 11.600000000000001 L4.5 14.100000000000001 L7.0 11.600000000000001Z" fill="#bdbdbd"/></svg>
<svg style="left:1231px;top:258px" width="14" height="15" viewBox="0 0 14 15" ><path d="M1 2 H11 M1 5.5 H11 M1 9 H11" stroke="#e0e0e0" stroke-width="1.3"/><path d="M11 12 L13 12 L12 13.5Z" fill="#bbb"/></svg>
<div class="a" style="left:1079px;top:275px;width:160px;height:135px;background:#393939"></div>
<div class="a" style="left:0;top:0;width:1248px;height:702px;clip-path:inset(275px 10px 292px 1079px)">
<div class="a" style="left:1094px;top:276px;width:144px;height:17px;background:#51708f"></div>
<div class="a" style="left:1112px;top:276px;width:1px;height:17px;background:#3d5873"></div>
<div class="a" style="left:1128px;top:276px;width:1px;height:17px;background:#3d5873"></div>
<div class="a" style="left:1141px;top:276px;width:1px;height:17px;background:#3d5873"></div>
<div class="a" style="left:1201px;top:276px;width:1px;height:17px;background:#3d5873"></div>
<div class="a" style="left:1214px;top:276px;width:1px;height:17px;background:#3d5873"></div>
<div class="a" style="left:1227px;top:276px;width:1px;height:17px;background:#3d5873"></div>
<svg style="left:1080px;top:279px" width="12" height="11" viewBox="0 0 12 11" ><path d="M0.5 5.5 Q6 -0.5 11.5 5.5 Q6 11.5 0.5 5.5Z" fill="#e8e8e8"/><circle cx="6" cy="5.2" r="2" fill="#333"/><path d="M1 6 Q6 11 11 6" fill="none" stroke="#777" stroke-width=".6"/></svg>
<svg style="left:1101px;top:281px" width="6" height="7" viewBox="0 0 6 7" ><path d="M1 0 V6 H6" fill="none" stroke="#3a4e63"/></svg>
<div class="a" style="left:1113px;top:277px;width:15px;height:15px;background:#fafafa;overflow:hidden;outline:1px solid #222"></div>
<svg style="left:1113px;top:277px" width="15" height="15" viewBox="0 0 15 15" class="clip"><rect x="0" y="2" width="2" height="2" fill="#d8d8d8"/><rect x="0" y="6" width="2" height="2" fill="#d8d8d8"/><rect x="0" y="10" width="2" height="2" fill="#d8d8d8"/><rect x="0" y="14" width="2" height="2" fill="#d8d8d8"/><rect x="2" y="0" width="2" height="2" fill="#d8d8d8"/><rect x="2" y="4" width="2" height="2" fill="#d8d8d8"/><rect x="2" y="8" width="2" height="2" fill="#d8d8d8"/><rect x="2" y="12" width="2" height="2" fill="#d8d8d8"/><rect x="4" y="2" width="2" height="2" fill="#d8d8d8"/><rect x="4" y="6" width="2" height="2" fill="#d8d8d8"/><rect x="4" y="10" width="2" height="2" fill="#d8d8d8"/><rect x="4" y="14" width="2" height="2" fill="#d8d8d8"/><rect x="6" y="0" width="2" height="2" fill="#d8d8d8"/><rect x="6" y="4" width="2" height="2" fill="#d8d8d8"/><rect x="6" y="8" width="2" height="2" fill="#d8d8d8"/><rect x="6" y="12" width="2" height="2" fill="#d8d8d8"/><rect x="8" y="2" width="2" height="2" fill="#d8d8d8"/><rect x="8" y="6" width="2" height="2" fill="#d8d8d8"/><rect x="8" y="10" width="2" height="2" fill="#d8d8d8"/><rect x="8" y="14" width="2" height="2" fill="#d8d8d8"/><rect x="10" y="0" width="2" height="2" fill="#d8d8d8"/><rect x="10" y="4" width="2" height="2" fill="#d8d8d8"/><rect x="10" y="8" width="2" height="2" fill="#d8d8d8"/><rect x="10" y="12" width="2" height="2" fill="#d8d8d8"/><rect x="12" y="2" width="2" height="2" fill="#d8d8d8"/><rect x="12" y="6" width="2" height="2" fill="#d8d8d8"/><rect x="12" y="10" width="2" height="2" fill="#d8d8d8"/><rect x="12" y="14" width="2" height="2" fill="#d8d8d8"/><rect x="14" y="0" width="2" height="2" fill="#d8d8d8"/><rect x="14" y="4" width="2" height="2" fill="#d8d8d8"/><rect x="14" y="8" width="2" height="2" fill="#d8d8d8"/><rect x="14" y="12" width="2" height="2" fill="#d8d8d8"/></svg>
<svg style="left:1130px;top:277px" width="9" height="8" viewBox="0 0 9 8" ><path d="M0.5 0.5 H5 Q8 0.5 8 3.5 Q8 6.5 5 6.5 H3 M3 2.5 L5 4.5 M5 2.5 V4.5 H3" fill="none" stroke="#ddd"/></svg>
<div class="t" style="left:1146px;top:275px;font-size:11px;letter-spacing:-0.843px;color:#f0f0f0;font-weight:bold">plants_d…</div>
<svg style="left:1202px;top:280px" width="11" height="10" viewBox="0 0 11 10" ><rect x="1" y="4" width="9" height="6" fill="#8aa3bc"/><path d="M6 4 V2 A2 2 0 0 1 10 2 V3" fill="none" stroke="#8aa3bc" stroke-width="1.2"/></svg>
<div class="t" style="left:1214px;top:277px;color:#8aa3bc;font-size:13px;font-style:italic">α</div>
<svg style="left:1226px;top:279px" width="11" height="11" viewBox="0 0 11 11" ><rect x="0.0" y="0.0" width="2.75" height="2.75" fill="#5c5c5c"/><rect x="0.0" y="2.75" width="2.75" height="2.75" fill="#8a8a8a"/><rect x="0.0" y="5.5" width="2.75" height="2.75" fill="#5c5c5c"/><rect x="0.0" y="8.25" width="2.75" height="2.75" fill="#8a8a8a"/><rect x="2.75" y="0.0" width="2.75" height="2.75" fill="#8a8a8a"/><rect x="2.75" y="2.75" width="2.75" height="2.75" fill="#5c5c5c"/><rect x="2.75" y="5.5" width="2.75" height="2.75" fill="#8a8a8a"/><rect x="2.75" y="8.25" width="2.75" height="2.75" fill="#5c5c5c"/><rect x="5.5" y="0.0" width="2.75" height="2.75" fill="#5c5c5c"/><rect x="5.5" y="2.75" width="2.75" height="2.75" fill="#8a8a8a"/><rect x="5.5" y="5.5" width="2.75" height="2.75" fill="#5c5c5c"/><rect x="5.5" y="8.25" width="2.75" height="2.75" fill="#8a8a8a"/><rect x="8.25" y="0.0" width="2.75" height="2.75" fill="#8a8a8a"/><rect x="8.25" y="2.75" width="2.75" height="2.75" fill="#5c5c5c"/><rect x="8.25" y="5.5" width="2.75" height="2.75" fill="#8a8a8a"/><rect x="8.25" y="8.25" width="2.75" height="2.75" fill="#5c5c5c"/></svg>
<svg style="left:1080px;top:297px" width="12" height="11" viewBox="0 0 12 11" ><path d="M0.5 5.5 Q6 -0.5 11.5 5.5 Q6 11.5 0.5 5.5Z" fill="#e8e8e8"/><circle cx="6" cy="5.2" r="2" fill="#333"/><path d="M1 6 Q6 11 11 6" fill="none" stroke="#777" stroke-width=".6"/></svg>
<svg style="left:1101px;top:299px" width="6" height="7" viewBox="0 0 6 7" ><path d="M1 0 V6 H6" fill="none" stroke="#555"/></svg>
<div class="a" style="left:1114px;top:301px;width:13px;height:5px;background:#fafafa;overflow:hidden"></div>
<svg style="left:1114px;top:301px" width="13" height="5" viewBox="0 0 13 5" class="clip"><rect x="0" y="2" width="2" height="2" fill="#d8d8d8"/><rect x="0" y="6" width="2" height="2" fill="#d8d8d8"/><rect x="0" y="10" width="2" height="2" fill="#d8d8d8"/><rect x="0" y="14" width="2" height="2" fill="#d8d8d8"/><rect x="2" y="0" width="2" height="2" fill="#d8d8d8"/><rect x="2" y="4" width="2" height="2" fill="#d8d8d8"/><rect x="2" y="8" width="2" height="2" fill="#d8d8d8"/><rect x="2" y="12" width="2" height="2" fill="#d8d8d8"/><rect x="4" y="2" width="2" height="2" fill="#d8d8d8"/><rect x="4" y="6" width="2" height="2" fill="#d8d8d8"/><rect x="4" y="10" width="2" height="2" fill="#d8d8d8"/><rect x="4" y="14" width="2" height="2" fill="#d8d8d8"/><rect x="6" y="0" width="2" height="2" fill="#d8d8d8"/><rect x="6" y="4" width="2" height="2" fill="#d8d8d8"/><rect x="6" y="8" width="2" height="2" fill="#d8d8d8"/><rect x="6" y="12" width="2" height="2" fill="#d8d8d8"/><rect x="8" y="2" width="2" height="2" fill="#d8d8d8"/><rect x="8" y="6" width="2" height="2" fill="#d8d8d8"/><rect x="8" y="10" width="2" height="2" fill="#d8d8d8"/><rect x="8" y="14" width="2" height="2" fill="#d8d8d8"/><rect x="10" y="0" width="2" height="2" fill="#d8d8d8"/><rect x="10" y="4" width="2" height="2" fill="#d8d8d8"/><rect x="10" y="8" width="2" height="2" fill="#d8d8d8"/><rect x="10" y="12" width="2" height="2" fill="#d8d8d8"/><rect x="12" y="2" width="2" height="2" fill="#d8d8d8"/><rect x="12" y="6" width="2" height="2" fill="#d8d8d8"/><rect x="12" y="10" width="2" height="2" fill="#d8d8d8"/><rect x="12" y="14" width="2" height="2" fill="#d8d8d8"/><rect x="14" y="0" width="2" height="2" fill="#d8d8d8"/><rect x="14" y="4" width="2" height="2" fill="#d8d8d8"/><rect x="14" y="8" width="2" height="2" fill="#d8d8d8"/><rect x="14" y="12" width="2" height="2" fill="#d8d8d8"/></svg>
<svg style="left:1130px;top:295px" width="9" height="8" viewBox="0 0 9 8" ><path d="M0.5 0.5 H5 Q8 0.5 8 3.5 Q8 6.5 5 6.5 H3 M3 2.5 L5 4.5 M5 2.5 V4.5 H3" fill="none" stroke="#ddd"/></svg>
<div class="t" style="left:1146px;top:293px;font-size:11px;letter-spacing:-1.064px;color:#e6e6e6">plants_tr…</div>
<svg style="left:1202px;top:298px" width="11" height="10" viewBox="0 0 11 10" ><rect x="1" y="4" width="9" height="6" fill="#777"/><path d="M6 4 V2 A2 2 0 0 1 10 2 V3" fill="none" stroke="#777" stroke-width="1.2"/></svg>
<div class="t" style="left:1214px;top:295px;color:#7a7a7a;font-size:13px;font-style:italic">α</div>
<svg style="left:1226px;top:297px" width="11" height="11" viewBox="0 0 11 11" ><rect x="0.0" y="0.0" width="2.75" height="2.75" fill="#5c5c5c"/><rect x="0.0" y="2.75" width="2.75" height="2.75" fill="#8a8a8a"/><rect x="0.0" y="5.5" width="2.75" height="2.75" fill="#5c5c5c"/><rect x="0.0" y="8.25" width="2.75" height="2.75" fill="#8a8a8a"/><rect x="2.75" y="0.0" width="2.75" height="2.75" fill="#8a8a8a"/><rect x="2.75" y="2.75" width="2.75" height="2.75" fill="#5c5c5c"/><rect x="2.75" y="5.5" width="2.75" height="2.75" fill="#8a8a8a"/><rect x="2.75" y="8.25" width="2.75" height="2.75" fill="#5c5c5c"/><rect x="5.5" y="0.0" width="2.75" height="2.75" fill="#5c5c5c"/><rect x="5.5" y="2.75" width="2.75" height="2.75" fill="#8a8a8a"/><rect x="5.5" y="5.5" width="2.75" height="2.75" fill="#5c5c5c"/><rect x="5.5" y="8.25" width="2.75" height="2.75" fill="#8a8a8a"/><rect x="8.25" y="0.0" width="2.75" height="2.75" fill="#8a8a8a"/><rect x="8.25" y="2.75" width="2.75" height="2.75" fill="#5c5c5c"/><rect x="8.25" y="5.5" width="2.75" height="2.75" fill="#8a8a8a"/><rect x="8.25" y="8.25" width="2.75" height="2.75" fill="#5c5c5c"/></svg>
<svg style="left:1080px;top:314px" width="12" height="11" viewBox="0 0 12 11" ><path d="M0.5 5.5 Q6 -0.5 11.5 5.5 Q6 11.5 0.5 5.5Z" fill="#e8e8e8"/><circle cx="6" cy="5.2" r="2" fill="#333"/><path d="M1 6 Q6 11 11 6" fill="none" stroke="#777" stroke-width=".6"/></svg>
<svg style="left:1101px;top:316px" width="6" height="7" viewBox="0 0 6 7" ><path d="M1 0 V6 H6" fill="none" stroke="#555"/></svg>
<div class="a" style="left:1115px;top:314px;width:11px;height:15px;background:#fafafa;overflow:hidden"></div>
<svg style="left:1115px;top:314px" width="11" height="15" viewBox="0 0 11 15" class="clip"><rect x="0" y="2" width="2" height="2" fill="#d8d8d8"/><rect x="0" y="6" width="2" height="2" fill="#d8d8d8"/><rect x="0" y="10" width="2" height="2" fill="#d8d8d8"/><rect x="0" y="14" width="2" height="2" fill="#d8d8d8"/><rect x="2" y="0" width="2" height="2" fill="#d8d8d8"/><rect x="2" y="4" width="2" height="2" fill="#d8d8d8"/><rect x="2" y="8" width="2" height="2" fill="#d8d8d8"/><rect x="2" y="12" width="2" height="2" fill="#d8d8d8"/><rect x="4" y="2" width="2" height="2" fill="#d8d8d8"/><rect x="4" y="6" width="2" height="2" fill="#d8d8d8"/><rect x="4" y="10" width="2" height="2" fill="#d8d8d8"/><rect x="4" y="14" width="2" height="2" fill="#d8d8d8"/><rect x="6" y="0" width="2" height="2" fill="#d8d8d8"/><rect x="6" y="4" width="2" height="2" fill="#d8d8d8"/><rect x="6" y="8" width="2" height="2" fill="#d8d8d8"/><rect x="6" y="12" width="2" height="2" fill="#d8d8d8"/><rect x="8" y="2" width="2" height="2" fill="#d8d8d8"/><rect x="8" y="6" width="2" height="2" fill="#d8d8d8"/><rect x="8" y="10" width="2" height="2" fill="#d8d8d8"/><rect x="8" y="14" width="2" height="2" fill="#d8d8d8"/><rect x="10" y="0" width="2" height="2" fill="#d8d8d8"/><rect x="10" y="4" width="2" height="2" fill="#d8d8d8"/><rect x="10" y="8" width="2" height="2" fill="#d8d8d8"/><rect x="10" y="12" width="2" height="2" fill="#d8d8d8"/><rect x="12" y="2" width="2" height="2" fill="#d8d8d8"/><rect x="12" y="6" width="2" height="2" fill="#d8d8d8"/><rect x="12" y="10" width="2" height="2" fill="#d8d8d8"/><rect x="12" y="14" width="2" height="2" fill="#d8d8d8"/><rect x="14" y="0" width="2" height="2" fill="#d8d8d8"/><rect x="14" y="4" width="2" height="2" fill="#d8d8d8"/><rect x="14" y="8" width="2" height="2" fill="#d8d8d8"/><rect x="14" y="12" width="2" height="2" fill="#d8d8d8"/><path d="M4 10 L7 5 L6 11" stroke="#3a7a2a" stroke-width="1.5" fill="none"/></svg>
<svg style="left:1130px;top:312px" width="9" height="8" viewBox="0 0 9 8" ><path d="M0.5 0.5 H5 Q8 0.5 8 3.5 Q8 6.5 5 6.5 H3 M3 2.5 L5 4.5 M5 2.5 V4.5 H3" fill="none" stroke="#ddd"/></svg>
<div class="t" style="left:1146px;top:310px;font-size:11px;letter-spacing:-1.169px;color:#e6e6e6">plants_p…</div>
<svg style="left:1202px;top:315px" width="11" height="10" viewBox="0 0 11 10" ><rect x="1" y="4" width="9" height="6" fill="#777"/><path d="M6 4 V2 A2 2 0 0 1 10 2 V3" fill="none" stroke="#777" stroke-width="1.2"/></svg>
<div class="t" style="left:1214px;top:312px;color:#7a7a7a;font-size:13px;font-style:italic">α</div>
<svg style="left:1226px;top:314px" width="11" height="11" viewBox="0 0 11 11" ><rect x="0.5" y="0.5" width="10" height="10" fill="#f0f0f0"/><rect x="2.5" y="4" width="6" height="5" fill="#111"/><path d="M3.5 4 V2.5 H7.5 V4" fill="none" stroke="#111"/></svg>
<svg style="left:1080px;top:331px" width="12" height="11" viewBox="0 0 12 11" ><path d="M0.5 5.5 Q6 -0.5 11.5 5.5 Q6 11.5 0.5 5.5Z" fill="#e8e8e8"/><circle cx="6" cy="5.2" r="2" fill="#333"/><path d="M1 6 Q6 11 11 6" fill="none" stroke="#777" stroke-width=".6"/></svg>
<svg style="left:1101px;top:333px" width="6" height="7" viewBox="0 0 6 7" ><path d="M1 0 V6 H6" fill="none" stroke="#555"/></svg>
<div class="a" style="left:1117px;top:330px;width:7px;height:16px;background:#fafafa;overflow:hidden"></div>
<svg style="left:1117px;top:330px" width="7" height="16" viewBox="0 0 7 16" class="clip"><rect x="0" y="2" width="2" height="2" fill="#d8d8d8"/><rect x="0" y="6" width="2" height="2" fill="#d8d8d8"/><rect x="0" y="10" width="2" height="2" fill="#d8d8d8"/><rect x="0" y="14" width="2" height="2" fill="#d8d8d8"/><rect x="2" y="0" width="2" height="2" fill="#d8d8d8"/><rect x="2" y="4" width="2" height="2" fill="#d8d8d8"/><rect x="2" y="8" width="2" height="2" fill="#d8d8d8"/><rect x="2" y="12" width="2" height="2" fill="#d8d8d8"/><rect x="4" y="2" width="2" height="2" fill="#d8d8d8"/><rect x="4" y="6" width="2" height="2" fill="#d8d8d8"/><rect x="4" y="10" width="2" height="2" fill="#d8d8d8"/><rect x="4" y="14" width="2" height="2" fill="#d8d8d8"/><rect x="6" y="0" width="2" height="2" fill="#d8d8d8"/><rect x="6" y="4" width="2" height="2" fill="#d8d8d8"/><rect x="6" y="8" width="2" height="2" fill="#d8d8d8"/><rect x="6" y="12" width="2" height="2" fill="#d8d8d8"/><rect x="8" y="2" width="2" height="2" fill="#d8d8d8"/><rect x="8" y="6" width="2" height="2" fill="#d8d8d8"/><rect x="8" y="10" width="2" height="2" fill="#d8d8d8"/><rect x="8" y="14" width="2" height="2" fill="#d8d8d8"/><rect x="10" y="0" width="2" height="2" fill="#d8d8d8"/><rect x="10" y="4" width="2" height="2" fill="#d8d8d8"/><rect x="10" y="8" width="2" height="2" fill="#d8d8d8"/><rect x="10" y="12" width="2" height="2" fill="#d8d8d8"/><rect x="12" y="2" width="2" height="2" fill="#d8d8d8"/><rect x="12" y="6" width="2" height="2" fill="#d8d8d8"/><rect x="12" y="10" width="2" height="2" fill="#d8d8d8"/><rect x="12" y="14" width="2" height="2" fill="#d8d8d8"/><rect x="14" y="0" width="2" height="2" fill="#d8d8d8"/><rect x="14" y="4" width="2" height="2" fill="#d8d8d8"/><rect x="14" y="8" width="2" height="2" fill="#d8d8d8"/><rect x="14" y="12" width="2" height="2" fill="#d8d8d8"/><path d="M3 13 L5 11" stroke="#3a7a2a" stroke-width="1.5"/></svg>
<svg style="left:1130px;top:329px" width="9" height="8" viewBox="0 0 9 8" ><path d="M0.5 0.5 H5 Q8 0.5 8 3.5 Q8 6.5 5 6.5 H3 M3 2.5 L5 4.5 M5 2.5 V4.5 H3" fill="none" stroke="#ddd"/></svg>
<div class="t" style="left:1146px;top:327px;font-size:11px;letter-spacing:-1.169px;color:#e6e6e6">plants_p…</div>
<svg style="left:1202px;top:332px" width="11" height="10" viewBox="0 0 11 10" ><rect x="1" y="4" width="9" height="6" fill="#777"/><path d="M6 4 V2 A2 2 0 0 1 10 2 V3" fill="none" stroke="#777" stroke-width="1.2"/></svg>
<div class="t" style="left:1214px;top:329px;color:#7a7a7a;font-size:13px;font-style:italic">α</div>
<svg style="left:1226px;top:331px" width="11" height="11" viewBox="0 0 11 11" ><rect x="0.5" y="0.5" width="10" height="10" fill="#f0f0f0"/><rect x="2.5" y="4" width="6" height="5" fill="#111"/><path d="M3.5 4 V2.5 H7.5 V4" fill="none" stroke="#111"/></svg>
<svg style="left:1080px;top:349px" width="12" height="11" viewBox="0 0 12 11" ><path d="M0.5 5.5 Q6 -0.5 11.5 5.5 Q6 11.5 0.5 5.5Z" fill="#e8e8e8"/><circle cx="6" cy="5.2" r="2" fill="#333"/><path d="M1 6 Q6 11 11 6" fill="none" stroke="#777" stroke-width=".6"/></svg>
<svg style="left:1101px;top:351px" width="6" height="7" viewBox="0 0 6 7" ><path d="M1 0 V6 H6" fill="none" stroke="#555"/></svg>
<div class="a" style="left:1113px;top:348px;width:15px;height:14px;background:#fafafa;overflow:hidden"></div>
<svg style="left:1113px;top:348px" width="15" height="14" viewBox="0 0 15 14" class="clip"><rect x="0" y="2" width="2" height="2" fill="#d8d8d8"/><rect x="0" y="6" width="2" height="2" fill="#d8d8d8"/><rect x="0" y="10" width="2" height="2" fill="#d8d8d8"/><rect x="0" y="14" width="2" height="2" fill="#d8d8d8"/><rect x="2" y="0" width="2" height="2" fill="#d8d8d8"/><rect x="2" y="4" width="2" height="2" fill="#d8d8d8"/><rect x="2" y="8" width="2" height="2" fill="#d8d8d8"/><rect x="2" y="12" width="2" height="2" fill="#d8d8d8"/><rect x="4" y="2" width="2" height="2" fill="#d8d8d8"/><rect x="4" y="6" width="2" height="2" fill="#d8d8d8"/><rect x="4" y="10" width="2" height="2" fill="#d8d8d8"/><rect x="4" y="14" width="2" height="2" fill="#d8d8d8"/><rect x="6" y="0" width="2" height="2" fill="#d8d8d8"/><rect x="6" y="4" width="2" height="2" fill="#d8d8d8"/><rect x="6" y="8" width="2" height="2" fill="#d8d8d8"/><rect x="6" y="12" width="2" height="2" fill="#d8d8d8"/><rect x="8" y="2" width="2" height="2" fill="#d8d8d8"/><rect x="8" y="6" width="2" height="2" fill="#d8d8d8"/><rect x="8" y="10" width="2" height="2" fill="#d8d8d8"/><rect x="8" y="14" width="2" height="2" fill="#d8d8d8"/><rect x="10" y="0" width="2" height="2" fill="#d8d8d8"/><rect x="10" y="4" width="2" height="2" fill="#d8d8d8"/><rect x="10" y="8" width="2" height="2" fill="#d8d8d8"/><rect x="10" y="12" width="2" height="2" fill="#d8d8d8"/><rect x="12" y="2" width="2" height="2" fill="#d8d8d8"/><rect x="12" y="6" width="2" height="2" fill="#d8d8d8"/><rect x="12" y="10" width="2" height="2" fill="#d8d8d8"/><rect x="12" y="14" width="2" height="2" fill="#d8d8d8"/><rect x="14" y="0" width="2" height="2" fill="#d8d8d8"/><rect x="14" y="4" width="2" height="2" fill="#d8d8d8"/><rect x="14" y="8" width="2" height="2" fill="#d8d8d8"/><rect x="14" y="12" width="2" height="2" fill="#d8d8d8"/><circle cx="4" cy="4" r="2" fill="#111"/><path d="M8 6 L10 8" stroke="#222"/></svg>
<svg style="left:1130px;top:347px" width="9" height="8" viewBox="0 0 9 8" ><path d="M0.5 0.5 H5 Q8 0.5 8 3.5 Q8 6.5 5 6.5 H3 M3 2.5 L5 4.5 M5 2.5 V4.5 H3" fill="none" stroke="#ddd"/></svg>
<div class="t" style="left:1146px;top:345px;font-size:11px;letter-spacing:-1.169px;color:#e6e6e6">plants_p…</div>
<svg style="left:1202px;top:350px" width="11" height="10" viewBox="0 0 11 10" ><rect x="1" y="4" width="9" height="6" fill="#777"/><path d="M6 4 V2 A2 2 0 0 1 10 2 V3" fill="none" stroke="#777" stroke-width="1.2"/></svg>
<div class="t" style="left:1214px;top:347px;color:#7a7a7a;font-size:13px;font-style:italic">α</div>
<svg style="left:1226px;top:349px" width="11" height="11" viewBox="0 0 11 11" ><rect x="0.5" y="0.5" width="10" height="10" fill="#f0f0f0"/><rect x="2.5" y="4" width="6" height="5" fill="#111"/><path d="M3.5 4 V2.5 H7.5 V4" fill="none" stroke="#111"/></svg>
<svg style="left:1080px;top:367px" width="12" height="11" viewBox="0 0 12 11" ><path d="M0.5 5.5 Q6 -0.5 11.5 5.5 Q6 11.5 0.5 5.5Z" fill="#e8e8e8"/><circle cx="6" cy="5.2" r="2" fill="#333"/><path d="M1 6 Q6 11 11 6" fill="none" stroke="#777" stroke-width=".6"/></svg>
<svg style="left:1101px;top:369px" width="6" height="7" viewBox="0 0 6 7" ><path d="M1 0 V6 H6" fill="none" stroke="#555"/></svg>
<div class="a" style="left:1116px;top:366px;width:10px;height:16px;background:#fafafa;overflow:hidden"></div>
<svg style="left:1116px;top:366px" width="10" height="16" viewBox="0 0 10 16" class="clip"><rect x="0" y="2" width="2" height="2" fill="#d8d8d8"/><rect x="0" y="6" width="2" height="2" fill="#d8d8d8"/><rect x="0" y="10" width="2" height="2" fill="#d8d8d8"/><rect x="0" y="14" width="2" height="2" fill="#d8d8d8"/><rect x="2" y="0" width="2" height="2" fill="#d8d8d8"/><rect x="2" y="4" width="2" height="2" fill="#d8d8d8"/><rect x="2" y="8" width="2" height="2" fill="#d8d8d8"/><rect x="2" y="12" width="2" height="2" fill="#d8d8d8"/><rect x="4" y="2" width="2" height="2" fill="#d8d8d8"/><rect x="4" y="6" width="2" height="2" fill="#d8d8d8"/><rect x="4" y="10" width="2" height="2" fill="#d8d8d8"/><rect x="4" y="14" width="2" height="2" fill="#d8d8d8"/><rect x="6" y="0" width="2" height="2" fill="#d8d8d8"/><rect x="6" y="4" width="2" height="2" fill="#d8d8d8"/><rect x="6" y="8" width="2" height="2" fill="#d8d8d8"/><rect x="6" y="12" width="2" height="2" fill="#d8d8d8"/><rect x="8" y="2" width="2" height="2" fill="#d8d8d8"/><rect x="8" y="6" width="2" height="2" fill="#d8d8d8"/><rect x="8" y="10" width="2" height="2" fill="#d8d8d8"/><rect x="8" y="14" width="2" height="2" fill="#d8d8d8"/><rect x="10" y="0" width="2" height="2" fill="#d8d8d8"/><rect x="10" y="4" width="2" height="2" fill="#d8d8d8"/><rect x="10" y="8" width="2" height="2" fill="#d8d8d8"/><rect x="10" y="12" width="2" height="2" fill="#d8d8d8"/><rect x="12" y="2" width="2" height="2" fill="#d8d8d8"/><rect x="12" y="6" width="2" height="2" fill="#d8d8d8"/><rect x="12" y="10" width="2" height="2" fill="#d8d8d8"/><rect x="12" y="14" width="2" height="2" fill="#d8d8d8"/><rect x="14" y="0" width="2" height="2" fill="#d8d8d8"/><rect x="14" y="4" width="2" height="2" fill="#d8d8d8"/><rect x="14" y="8" width="2" height="2" fill="#d8d8d8"/><rect x="14" y="12" width="2" height="2" fill="#d8d8d8"/><path d="M2 3 L4 6 L3 9 M7 9 L8 13" stroke="#1a3a1a" stroke-width="1.8" fill="none"/><circle cx="5" cy="12" r="1.5" fill="#2a6a2a"/></svg>
<svg style="left:1130px;top:365px" width="9" height="8" viewBox="0 0 9 8" ><path d="M0.5 0.5 H5 Q8 0.5 8 3.5 Q8 6.5 5 6.5 H3 M3 2.5 L5 4.5 M5 2.5 V4.5 H3" fill="none" stroke="#ddd"/></svg>
<div class="t" style="left:1146px;top:363px;font-size:11px;letter-spacing:-1.169px;color:#e6e6e6">plants_b…</div>
<svg style="left:1202px;top:368px" width="11" height="10" viewBox="0 0 11 10" ><rect x="1" y="4" width="9" height="6" fill="#777"/><path d="M6 4 V2 A2 2 0 0 1 10 2 V3" fill="none" stroke="#777" stroke-width="1.2"/></svg>
<div class="t" style="left:1214px;top:365px;color:#7a7a7a;font-size:13px;font-style:italic">α</div>
<svg style="left:1226px;top:367px" width="11" height="11" viewBox="0 0 11 11" ><rect x="0.5" y="0.5" width="10" height="10" fill="#f0f0f0"/><rect x="2.5" y="4" width="6" height="5" fill="#111"/><path d="M3.5 4 V2.5 H7.5 V4" fill="none" stroke="#111"/></svg>
<svg style="left:1080px;top:384px" width="12" height="11" viewBox="0 0 12 11" ><path d="M0.5 5.5 Q6 -0.5 11.5 5.5 Q6 11.5 0.5 5.5Z" fill="#e8e8e8"/><circle cx="6" cy="5.2" r="2" fill="#333"/><path d="M1 6 Q6 11 11 6" fill="none" stroke="#777" stroke-width=".6"/></svg>
<svg style="left:1101px;top:386px" width="6" height="7" viewBox="0 0 6 7" ><path d="M1 0 V6 H6" fill="none" stroke="#555"/></svg>
<div class="a" style="left:1115px;top:383px;width:11px;height:15px;background:#fafafa;overflow:hidden"></div>
<svg style="left:1115px;top:383px" width="11" height="15" viewBox="0 0 11 15" class="clip"><rect x="0" y="2" width="2" height="2" fill="#d8d8d8"/><rect x="0" y="6" width="2" height="2" fill="#d8d8d8"/><rect x="0" y="10" width="2" height="2" fill="#d8d8d8"/><rect x="0" y="14" width="2" height="2" fill="#d8d8d8"/><rect x="2" y="0" width="2" height="2" fill="#d8d8d8"/><rect x="2" y="4" width="2" height="2" fill="#d8d8d8"/><rect x="2" y="8" width="2" height="2" fill="#d8d8d8"/><rect x="2" y="12" width="2" height="2" fill="#d8d8d8"/><rect x="4" y="2" width="2" height="2" fill="#d8d8d8"/><rect x="4" y="6" width="2" height="2" fill="#d8d8d8"/><rect x="4" y="10" width="2" height="2" fill="#d8d8d8"/><rect x="4" y="14" width="2" height="2" fill="#d8d8d8"/><rect x="6" y="0" width="2" height="2" fill="#d8d8d8"/><rect x="6" y="4" width="2" height="2" fill="#d8d8d8"/><rect x="6" y="8" width="2" height="2" fill="#d8d8d8"/><rect x="6" y="12" width="2" height="2" fill="#d8d8d8"/><rect x="8" y="2" width="2" height="2" fill="#d8d8d8"/><rect x="8" y="6" width="2" height="2" fill="#d8d8d8"/><rect x="8" y="10" width="2" height="2" fill="#d8d8d8"/><rect x="8" y="14" width="2" height="2" fill="#d8d8d8"/><rect x="10" y="0" width="2" height="2" fill="#d8d8d8"/><rect x="10" y="4" width="2" height="2" fill="#d8d8d8"/><rect x="10" y="8" width="2" height="2" fill="#d8d8d8"/><rect x="10" y="12" width="2" height="2" fill="#d8d8d8"/><rect x="12" y="2" width="2" height="2" fill="#d8d8d8"/><rect x="12" y="6" width="2" height="2" fill="#d8d8d8"/><rect x="12" y="10" width="2" height="2" fill="#d8d8d8"/><rect x="12" y="14" width="2" height="2" fill="#d8d8d8"/><rect x="14" y="0" width="2" height="2" fill="#d8d8d8"/><rect x="14" y="4" width="2" height="2" fill="#d8d8d8"/><rect x="14" y="8" width="2" height="2" fill="#d8d8d8"/><rect x="14" y="12" width="2" height="2" fill="#d8d8d8"/><path d="M6 3 L8 5" stroke="#c04040" stroke-width="1"/></svg>
<svg style="left:1130px;top:382px" width="9" height="8" viewBox="0 0 9 8" ><path d="M0.5 0.5 H5 Q8 0.5 8 3.5 Q8 6.5 5 6.5 H3 M3 2.5 L5 4.5 M5 2.5 V4.5 H3" fill="none" stroke="#ddd"/></svg>
<div class="t" style="left:1146px;top:380px;font-size:11px;letter-spacing:-1.162px;color:#e6e6e6">plants_sh…</div>
<svg style="left:1202px;top:385px" width="11" height="10" viewBox="0 0 11 10" ><rect x="1" y="4" width="9" height="6" fill="#777"/><path d="M6 4 V2 A2 2 0 0 1 10 2 V3" fill="none" stroke="#777" stroke-width="1.2"/></svg>
<div class="t" style="left:1214px;top:382px;color:#7a7a7a;font-size:13px;font-style:italic">α</div>
<svg style="left:1226px;top:384px" width="11" height="11" viewBox="0 0 11 11" ><rect x="0.0" y="0.0" width="2.75" height="2.75" fill="#5c5c5c"/><rect x="0.0" y="2.75" width="2.75" height="2.75" fill="#8a8a8a"/><rect x="0.0" y="5.5" width="2.75" height="2.75" fill="#5c5c5c"/><rect x="0.0" y="8.25" width="2.75" height="2.75" fill="#8a8a8a"/><rect x="2.75" y="0.0" width="2.75" height="2.75" fill="#8a8a8a"/><rect x="2.75" y="2.75" width="2.75" height="2.75" fill="#5c5c5c"/><rect x="2.75" y="5.5" width="2.75" height="2.75" fill="#8a8a8a"/><rect x="2.75" y="8.25" width="2.75" height="2.75" fill="#5c5c5c"/><rect x="5.5" y="0.0" width="2.75" height="2.75" fill="#5c5c5c"/><rect x="5.5" y="2.75" width="2.75" height="2.75" fill="#8a8a8a"/><rect x="5.5" y="5.5" width="2.75" height="2.75" fill="#5c5c5c"/><rect x="5.5" y="8.25" width="2.75" height="2.75" fill="#8a8a8a"/><rect x="8.25" y="0.0" width="2.75" height="2.75" fill="#8a8a8a"/><rect x="8.25" y="2.75" width="2.75" height="2.75" fill="#5c5c5c"/><rect x="8.25" y="5.5" width="2.75" height="2.75" fill="#8a8a8a"/><rect x="8.25" y="8.25" width="2.75" height="2.75" fill="#5c5c5c"/></svg>
<svg style="left:1080px;top:401px" width="12" height="11" viewBox="0 0 12 11" ><path d="M0.5 5.5 Q6 -0.5 11.5 5.5 Q6 11.5 0.5 5.5Z" fill="#e8e8e8"/><circle cx="6" cy="5.2" r="2" fill="#333"/><path d="M1 6 Q6 11 11 6" fill="none" stroke="#777" stroke-width=".6"/></svg>
<div class="a" style="left:1097px;top:400px;width:14px;height:14px;background:#f5f5f5"></div>
<svg style="left:1097px;top:400px" width="14" height="14" viewBox="0 0 14 14" ><path d="M3 8 L5 6 M8 10 L10 9" stroke="#c05050" stroke-width="1.2"/><path d="M6 3 L7 5" stroke="#555"/></svg>
<svg style="left:1115px;top:399px" width="9" height="10" viewBox="0 0 9 10" ><rect x="0.5" y="1.5" width="8" height="7" fill="none" stroke="#ddd"/><rect x="2" y="0.5" width="4" height="2" fill="#ddd"/></svg>
<div class="t" style="left:1128px;top:397.5px;font-size:11px;letter-spacing:-1.092px;color:#e6e6e6">additional_ob…</div>
<svg style="left:1202px;top:402px" width="11" height="10" viewBox="0 0 11 10" ><rect x="1" y="4" width="9" height="6" fill="#777"/><path d="M6 4 V2 A2 2 0 0 1 10 2 V3" fill="none" stroke="#777" stroke-width="1.2"/></svg>
<div class="t" style="left:1214px;top:399px;color:#7a7a7a;font-size:13px;font-style:italic">α</div>
<svg style="left:1226px;top:401px" width="11" height="11" viewBox="0 0 11 11" ><rect x="0.5" y="1.5" width="10" height="8" fill="none" stroke="#888"/><path d="M1 4 H10 M1 6.5 H10" stroke="#888"/></svg>
</div>
<div class="a" style="left:1238px;top:276px;width:10px;height:134px;background:#383838"></div>
<div class="a" style="left:1239px;top:277px;width:8px;height:8px;background:#444;border:1px solid #2f2f2f"></div>
<svg style="left:1239px;top:277px" width="8" height="8" viewBox="0 0 8 8" ><path d="M1.5 5.5 L4 2.5 L6.5 5.5Z" fill="#bbb"/></svg>
<div class="a" style="left:1239px;top:400px;width:8px;height:9px;background:#444;border:1px solid #2f2f2f"></div>
<svg style="left:1239px;top:400px" width="8" height="9" viewBox="0 0 8 9" ><path d="M1.5 3 L4 6 L6.5 3Z" fill="#bbb"/></svg>
<div class="a" style="left:1239px;top:305px;width:8px;height:50px;background:#3f3f3f;border:1px solid #333;border-radius:2px"></div>
<svg style="left:1080px;top:412px" width="16" height="16" viewBox="0 0 16 16" ><path d="M8 1 V15 M1 8 H15" stroke="#e8e8e8" stroke-width="1.6"/></svg>
<svg style="left:1099px;top:417px" width="7" height="4" viewBox="0 0 7 4" ><path d="M0 0 H7 L3.5 3.5Z" fill="#bbb"/></svg>
<svg style="left:1109px;top:412px" width="15" height="15" viewBox="0 0 15 15" ><rect x="3.5" y="0.5" width="10" height="10" fill="none" stroke="#e8e8e8" stroke-width="1.2"/><path d="M1 4 V13.5 H10.5" fill="none" stroke="#e8e8e8" stroke-width="1.2"/></svg>
<svg style="left:1130px;top:414px" width="15" height="10" viewBox="0 0 15 10" ><path d="M1 2 L7.5 8.5 L14 2" fill="none" stroke="#e8e8e8" stroke-width="1.4"/></svg>
<svg style="left:1151px;top:414px" width="15" height="10" viewBox="0 0 15 10" ><path d="M1 8.5 L7.5 2 L14 8.5" fill="none" stroke="#e8e8e8" stroke-width="1.4"/></svg>
<svg style="left:1172px;top:413px" width="15" height="13" viewBox="0 0 15 13" ><path d="M1 2.5 H14 M1 6.5 H14 M1 10.5 H14" stroke="#e8e8e8" stroke-width="1.2"/><rect x="8" y="1" width="2.5" height="3" fill="#e8e8e8"/><rect x="3.5" y="5" width="2.5" height="3" fill="#e8e8e8"/><rect x="9" y="9" width="2.5" height="3" fill="#e8e8e8"/></svg>
<svg style="left:1231px;top:412px" width="13" height="16" viewBox="0 0 13 16" ><path d="M2 4 H11 L10 15 H3 Z" fill="#e8e8e8"/><rect x="1" y="2" width="11" height="1.6" fill="#e8e8e8"/><rect x="4.5" y="0.5" width="4" height="1.5" fill="#e8e8e8"/></svg>
<svg style="left:1158px;top:432px" width="12" height="2" viewBox="0 0 12 2" ><rect x="0" width="1" height="1" fill="#777"/><rect x="1" y="1" width="1" height="1" fill="#666"/><rect x="2" width="1" height="1" fill="#777"/><rect x="3" y="1" width="1" height="1" fill="#666"/><rect x="4" width="1" height="1" fill="#777"/><rect x="5" y="1" width="1" height="1" fill="#666"/><rect x="6" width="1" height="1" fill="#777"/><rect x="7" y="1" width="1" height="1" fill="#666"/><rect x="8" width="1" height="1" fill="#777"/><rect x="9" y="1" width="1" height="1" fill="#666"/><rect x="10" width="1" height="1" fill="#777"/><rect x="11" y="1" width="1" height="1" fill="#666"/></svg>
<svg style="left:1080px;top:435px" width="12" height="12" viewBox="0 0 12 12" ><circle cx="6" cy="6" r="5.3" fill="none" stroke="#d0d0d0" stroke-width="1"/><rect x="3.3" y="5.5" width="5.4" height="3.5" fill="#d0d0d0"/><path d="M4.2 5.5 V4 A1.8 1.8 0 0 1 7.8 4" fill="none" stroke="#d0d0d0"/></svg>
<div class="t" style="left:1095px;top:432.5px;font-size:11px;letter-spacing:-0.852px;color:#e6e6e6">Brush Presets</div>
<svg style="left:1220px;top:436px" width="25" height="11" viewBox="0 0 25 11" ><rect x="0.5" y="3.5" width="6" height="6" fill="none" stroke="#e0e0e0"/><path d="M3.5 3.5 V0.5 H9.5 V6.5 H6.5" fill="none" stroke="#e0e0e0"/><path d="M16.5 1.5 L23.5 8.5 M23.5 1.5 L16.5 8.5" stroke="#e8e8e8" stroke-width="1.2"/></svg>
<div class="a" style="left:1079px;top:450px;width:97px;height:18px;background:linear-gradient(#4a4a4a,#434343);border:1px solid #555;border-radius:3px"></div>
<div class="t" style="left:1082px;top:450px;color:#e6e6e6;font-size:11px">Paint</div>
<svg style="left:1165px;top:458px" width="7" height="4" viewBox="0 0 7 4" ><path d="M0 0 H7 L3.5 3.5Z" fill="#bbb"/></svg>
<div class="a" style="left:1178px;top:450px;width:38px;height:18px;background:linear-gradient(#4a4a4a,#434343);border:1px solid #555;border-radius:3px"></div>
<svg style="left:1181px;top:452px" width="8" height="13" viewBox="0 0 8 13" ><path d="M1 1 H7 V12 L4 9 L1 12 Z" fill="none" stroke="#e0e0e0" stroke-width="1.2"/></svg>
<div class="t" style="left:1191px;top:450px;color:#e6e6e6;font-size:11px">Tag</div>
<svg style="left:1210px;top:463px" width="5" height="3" viewBox="0 0 5 3" ><path d="M0 0 H5 L2.5 2.5Z" fill="#bbb"/></svg>
<div class="a" style="left:1218px;top:450px;width:14px;height:18px;background:linear-gradient(#4a4a4a,#434343);border:1px solid #555;border-radius:3px"></div>
<svg style="left:1220px;top:455px" width="10" height="8" viewBox="0 0 10 8" ><path d="M0 1 H10 M0 4 H10 M0 7 H10" stroke="#e0e0e0" stroke-width="1.2"/></svg>
<div class="a" style="left:1233px;top:450px;width:15px;height:18px;background:linear-gradient(#4a4a4a,#434343);border:1px solid #555;border-radius:3px"></div>
<svg style="left:1235px;top:453px" width="11" height="11" viewBox="0 0 11 11" ><rect x="0.5" y="0.5" width="10" height="10" fill="none" stroke="#e0e0e0"/><path d="M5.5 0.5 V5" stroke="#e0e0e0"/></svg>
<div class="a" style="left:1078px;top:468px;width:160px;height:190px;background:#2b2b2b"></div>
<svg style="left:0;top:0" width="0" height="0"><defs><linearGradient id="gd"><stop offset="0" stop-color="#eee"/><stop offset="1" stop-color="#333"/></linearGradient><linearGradient id="gd2"><stop offset="0" stop-color="#eee"/><stop offset="1" stop-color="#000"/></linearGradient><linearGradient id="gd3"><stop offset="0" stop-color="#111"/><stop offset=".4" stop-color="#222"/><stop offset="1" stop-color="#ccc"/></linearGradient><linearGradient id="gd4"><stop offset="0" stop-color="#888"/><stop offset="1" stop-color="#333"/></linearGradient><linearGradient id="gp"><stop offset="0" stop-color="#9a6ad8"/><stop offset=".6" stop-color="#b89ae0"/><stop offset="1" stop-color="#fff"/></linearGradient><linearGradient id="gg"><stop offset="0" stop-color="#fff"/><stop offset="1" stop-color="#60c050"/></linearGradient><linearGradient id="gg2"><stop offset="0" stop-color="#80d070"/><stop offset=".5" stop-color="#fff"/><stop offset="1" stop-color="#70c060"/></linearGradient></defs></svg>
<div class="a" style="left:1080px;top:470px;width:37px;height:37px;background:radial-gradient(circle at 50% 45%,#dcdcdc 0,#d2d2d2 60%,#bdbdbd 100%)"></div>
<svg style="left:1080px;top:470px" width="37" height="37" viewBox="0 0 37 37" class="clip"><path d="M9 27 Q12 24 16 28 Q20 32 25 31 Q31 29 37 25" stroke="url(#gd)" stroke-width="3.2" fill="none" stroke-linecap="round" opacity=".92"/><path d="M37 0 L28 8" stroke="#e8a030" stroke-width="4.2"/><path d="M28.5 7.5 L20 16" stroke="#c9b8dc" stroke-width="4"/><path d="M27.5 6 L19 14.5" stroke="#fff" stroke-width="1" opacity=".85"/><path d="M19.5 13 L22.5 17 Q17 23 11 24.5 Q10 24 11.5 21.5 Q14.5 16 19.5 13Z" fill="#5a2e22"/></svg>
<div class="a" style="left:1119px;top:470px;width:37px;height:37px;background:radial-gradient(circle at 50% 45%,#dcdcdc 0,#d2d2d2 60%,#bdbdbd 100%)"></div>
<svg style="left:1119px;top:470px" width="37" height="37" viewBox="0 0 37 37" class="clip"><path d="M6 33 Q13 26 17 29 Q20 33 23 29 Q28 33 37 25" stroke="url(#gd2)" stroke-width="1.3" fill="none" stroke-linecap="round" opacity=".92"/><path d="M37 0 L28 8" stroke="#e27e18" stroke-width="3.4"/><path d="M28.5 7.5 L20 15" stroke="#c9b8dc" stroke-width="3"/><path d="M28 6.5 L19.5 14" stroke="#fff" stroke-width=".9" opacity=".8"/><path d="M21 13.5 L22 16.5 L14 21.5 Q11 22.5 12.5 20 Z" fill="#5a2020"/></svg>
<div class="a" style="left:1158px;top:470px;width:37px;height:37px;background:radial-gradient(circle at 50% 45%,#dcdcdc 0,#d2d2d2 60%,#bdbdbd 100%)"></div>
<svg style="left:1158px;top:470px" width="37" height="37" viewBox="0 0 37 37" class="clip"><path d="M11 24 Q11 31 18 31 Q25 29 28 32 Q31 35 37 33" stroke="#111" stroke-width="2.8" fill="none" stroke-linecap="round" opacity=".92"/><path d="M37 0 L28 8" stroke="#8aa83a" stroke-width="4.2"/><path d="M28.5 7.5 L20 16" stroke="#c9b8dc" stroke-width="4"/><path d="M27.5 6 L19 14.5" stroke="#fff" stroke-width="1" opacity=".85"/><path d="M19.5 13 L22.5 17 Q17 23 11 24.5 Q10 24 11.5 21.5 Q14.5 16 19.5 13Z" fill="#3a1a18"/></svg>
<div class="a" style="left:1197px;top:470px;width:37px;height:37px;background:radial-gradient(circle at 50% 45%,#dcdcdc 0,#d2d2d2 60%,#bdbdbd 100%)"></div>
<svg style="left:1197px;top:470px" width="37" height="37" viewBox="0 0 37 37" class="clip"><path d="M16 29 Q24 31 28 28 Q33 30 36 33" stroke="url(#gd3)" stroke-width="3.5" fill="none" stroke-linecap="round" opacity=".92"/><path d="M8 19 Q4 26 10 31 Q13 33 15 29 Q12 24 12 20Z" fill="#111"/><path d="M37 0 L29 8" stroke="#6a6a6a" stroke-width="6"/><path d="M30 7 L22 15" stroke="#d0c4dc" stroke-width="7.5"/><path d="M28 4 L20 12" stroke="#fff" stroke-width="1.6" opacity=".85"/><path d="M17.5 10.5 L26.5 19.5 Q23 26 17 25 Q11 22 11 17 Z" fill="#a8a890"/></svg>
<div class="a" style="left:1080px;top:509px;width:37px;height:37px;background:radial-gradient(circle at 50% 45%,#dcdcdc 0,#d2d2d2 60%,#bdbdbd 100%)"></div>
<svg style="left:1080px;top:509px" width="37" height="37" viewBox="0 0 37 37" class="clip"><path d="M6 26 Q9 34 20 34 Q28 33 37 29" stroke="#111" stroke-width="5" fill="none" stroke-linecap="round" opacity=".92"/><path d="M37 0 L29 8" stroke="#222" stroke-width="5.5"/><path d="M30 7 L21 16" stroke="#e8e8f0" stroke-width="6.5"/><path d="M28 4.5 L19 13.5" stroke="#fff" stroke-width="1.4" opacity=".85"/><path d="M18 12 L25 19 Q21 25 16 25 Q11 24 11 20 Q12 15 18 12Z" fill="#2a2a2a"/></svg>
<div class="a" style="left:1119px;top:509px;width:37px;height:37px;background:radial-gradient(circle at 50% 45%,#dcdcdc 0,#d2d2d2 60%,#bdbdbd 100%)"></div>
<svg style="left:1119px;top:509px" width="37" height="37" viewBox="0 0 37 37" class="clip"><path d="M8 29 Q12 35 22 33 Q30 31 37 31" stroke="url(#gd4)" stroke-width="5" fill="none" stroke-linecap="round" opacity=".92"/><path d="M37 0 L28 8" stroke="#7a9a3a" stroke-width="4.2"/><path d="M28.5 7.5 L20 16" stroke="#b8b8b8" stroke-width="4"/><path d="M27.5 6 L19 14.5" stroke="#fff" stroke-width="1" opacity=".85"/><path d="M19.5 13 L22.5 17 Q17 23 11 24.5 Q10 24 11.5 21.5 Q14.5 16 19.5 13Z" fill="#4a2020"/></svg>
<div class="a" style="left:1158px;top:509px;width:37px;height:37px;background:radial-gradient(circle at 50% 45%,#dcdcdc 0,#d2d2d2 60%,#bdbdbd 100%)"></div>
<svg style="left:1158px;top:509px" width="37" height="37" viewBox="0 0 37 37" class="clip"><path d="M7 30 Q10 33 16 32 Q24 31 28 32 Q32 34 37 33" stroke="#1a1a1a" stroke-width="3.2" fill="none" stroke-linecap="round" opacity=".92"/><path d="M37 0 L29 8" stroke="#f0f0f0" stroke-width="6"/><path d="M30 7 L22 15" stroke="#d8cce4" stroke-width="7.5"/><path d="M28 4 L20 12" stroke="#fff" stroke-width="1.6" opacity=".85"/><path d="M17.5 10.5 L26.5 19.5 Q23 26 17 25 Q11 22 11 17 Z" fill="#d8c890"/></svg>
<div class="a" style="left:1197px;top:509px;width:37px;height:37px;background:radial-gradient(circle at 50% 45%,#dcdcdc 0,#d2d2d2 60%,#bdbdbd 100%)"></div>
<svg style="left:1197px;top:509px" width="37" height="37" viewBox="0 0 37 37" class="clip"><path d="M8 28 Q10 34 18 34 Q28 35 37 35" stroke="#222" stroke-width="5" fill="none" stroke-linecap="round" opacity=".92"/><path d="M4 22 L12 22 L18 30 L10 37 L4 37Z" fill="#222" opacity=".85"/><path d="M37 0 L29 8" stroke="#eee" stroke-width="6"/><path d="M30 7 L22 15" stroke="#d8cce4" stroke-width="7.5"/><path d="M28 4 L20 12" stroke="#fff" stroke-width="1.6" opacity=".85"/><path d="M17.5 10.5 L26.5 19.5 Q23 26 17 25 Q11 22 11 17 Z" fill="#d0bc88"/></svg>
<div class="a" style="left:1080px;top:548px;width:37px;height:37px;background:radial-gradient(circle at 50% 45%,#dcdcdc 0,#d2d2d2 60%,#bdbdbd 100%)"></div>
<svg style="left:1080px;top:548px" width="37" height="37" viewBox="0 0 37 37" class="clip"><path d="M8 28 Q14 25 22 30 Q28 33 37 31" stroke="#111" stroke-width="5" fill="none" stroke-linecap="round" opacity=".92"/><path d="M37 0 L29 8" stroke="#a87038" stroke-width="6"/><path d="M30 7 L22 15" stroke="#8a7a50" stroke-width="7.5"/><path d="M28 4 L20 12" stroke="#fff" stroke-width="1.6" opacity=".85"/><path d="M17.5 10.5 L26.5 19.5 Q23 26 17 25 Q11 22 11 17 Z" fill="#b0a050"/></svg>
<div class="a" style="left:1119px;top:548px;width:37px;height:37px;background:radial-gradient(circle at 50% 45%,#dcdcdc 0,#d2d2d2 60%,#bdbdbd 100%)"></div>
<svg style="left:1119px;top:548px" width="37" height="37" viewBox="0 0 37 37" class="clip"><path d="M6 26 Q14 29 20 30 Q28 29 36 31 M8 30 Q16 33 34 33" stroke="#222" stroke-width="2" fill="none" stroke-linecap="round" opacity=".92"/><path d="M37 0 L29 8" stroke="#333" stroke-width="5.5"/><path d="M30 7 L21 16" stroke="#d8cce4" stroke-width="6.5"/><path d="M28 4.5 L19 13.5" stroke="#fff" stroke-width="1.4" opacity=".85"/><path d="M18 12 L25 19 Q21 25 16 25 Q11 24 11 20 Q12 15 18 12Z" fill="#c8c0a0"/></svg>
<div class="a" style="left:1158px;top:548px;width:37px;height:37px;background:radial-gradient(circle at 50% 45%,#dcdcdc 0,#d2d2d2 60%,#bdbdbd 100%)"></div>
<svg style="left:1158px;top:548px" width="37" height="37" viewBox="0 0 37 37" class="clip"><path d="M8 24 Q8 34 18 34 Q28 31 37 29" stroke="#1a1a1a" stroke-width="6" fill="none" stroke-linecap="round" opacity=".92"/><path d="M37 0 L29 8" stroke="#c8a0a0" stroke-width="6"/><path d="M30 7 L22 15" stroke="#9a8a90" stroke-width="7.5"/><path d="M28 4 L20 12" stroke="#fff" stroke-width="1.6" opacity=".85"/><path d="M17.5 10.5 L26.5 19.5 Q23 26 17 25 Q11 22 11 17 Z" fill="#c8b890"/></svg>
<div class="a" style="left:1197px;top:548px;width:37px;height:37px;background:radial-gradient(circle at 50% 45%,#dcdcdc 0,#d2d2d2 60%,#bdbdbd 100%)"></div>
<svg style="left:1197px;top:548px" width="37" height="37" viewBox="0 0 37 37" class="clip"><path d="M10 28 Q20 30 36 33" stroke="url(#gp)" stroke-width="4.5" fill="none" stroke-linecap="round" opacity=".92"/><path d="M37 0 L28 8" stroke="#555" stroke-width="4.2"/><path d="M28.5 7.5 L20 16" stroke="#d0c4dc" stroke-width="4"/><path d="M27.5 6 L19 14.5" stroke="#fff" stroke-width="1" opacity=".85"/><path d="M19.5 13 L22.5 17 Q17 23 11 24.5 Q10 24 11.5 21.5 Q14.5 16 19.5 13Z" fill="#9a60e0"/><path d="M10 6 Q12 9 12 10.5 A2 2 0 0 1 8 10.5 Q8 9 10 6Z" fill="#3aa0f0"/><path d="M7 4.5 L8 6.5" stroke="#3aa0f0" stroke-width=".8"/></svg>
<div class="a" style="left:1080px;top:587px;width:37px;height:37px;background:radial-gradient(circle at 50% 45%,#dcdcdc 0,#d2d2d2 60%,#bdbdbd 100%)"></div>
<svg style="left:1080px;top:587px" width="37" height="37" viewBox="0 0 37 37" class="clip"><path d="M6 33 Q16 30 32 27" stroke="url(#gp)" stroke-width="5.5" fill="none" stroke-linecap="round" opacity=".92"/><path d="M37 0 L29 8" stroke="#7a5030" stroke-width="6"/><path d="M30 7 L22 15" stroke="#a080c0" stroke-width="7.5"/><path d="M28 4 L20 12" stroke="#fff" stroke-width="1.6" opacity=".85"/><path d="M17.5 10.5 L26.5 19.5 Q23 26 17 25 Q11 22 11 17 Z" fill="#8a50d0"/><path d="M10 6 Q12 9 12 10.5 A2 2 0 0 1 8 10.5 Q8 9 10 6Z" fill="#3aa0f0"/><path d="M7 4.5 L8 6.5" stroke="#3aa0f0" stroke-width=".8"/></svg>
<div class="a" style="left:1119px;top:587px;width:37px;height:37px;background:radial-gradient(circle at 50% 45%,#dcdcdc 0,#d2d2d2 60%,#bdbdbd 100%)"></div>
<svg style="left:1119px;top:587px" width="37" height="37" viewBox="0 0 37 37" class="clip"><path d="M8 26 Q12 33 20 31 Q28 33 37 28" stroke="url(#gp)" stroke-width="3.8" fill="none" stroke-linecap="round" opacity=".92"/><path d="M4 10 A3 3 0 0 1 9 8 M9 12 A3 3 0 0 1 4 13" stroke="#444" stroke-width="1.2" fill="none"/><path d="M37 0 L31 6" stroke="#7a5a30" stroke-width="3.5"/><path d="M31 6 L27 12 L23 14" stroke="#777" stroke-width="1.3" fill="none"/><path d="M23 13 Q26 16 22 21 Q17 25 13 25 Q13 20 17 16 Z" fill="#b0b0b0" stroke="#555" stroke-width=".6"/><path d="M10 6 Q12 9 12 10.5 A2 2 0 0 1 8 10.5 Q8 9 10 6Z" fill="#3aa0f0"/><path d="M7 4.5 L8 6.5" stroke="#3aa0f0" stroke-width=".8"/></svg>
<div class="a" style="left:1158px;top:587px;width:37px;height:37px;background:radial-gradient(circle at 50% 45%,#dcdcdc 0,#d2d2d2 60%,#bdbdbd 100%)"></div>
<svg style="left:1158px;top:587px" width="37" height="37" viewBox="0 0 37 37" class="clip"><path d="M5 28 Q18 30 37 31" stroke="url(#gp)" stroke-width="4.5" fill="none" stroke-linecap="round" opacity=".92"/><path d="M37 0 L28 8" stroke="#a06828" stroke-width="4.2"/><path d="M28.5 7.5 L20 16" stroke="#ddd" stroke-width="4"/><path d="M27.5 6 L19 14.5" stroke="#fff" stroke-width="1" opacity=".85"/><path d="M19.5 13 L22.5 17 Q17 23 11 24.5 Q10 24 11.5 21.5 Q14.5 16 19.5 13Z" fill="#2a1a18"/><path d="M10 6 Q12 9 12 10.5 A2 2 0 0 1 8 10.5 Q8 9 10 6Z" fill="#3aa0f0"/><path d="M7 4.5 L8 6.5" stroke="#3aa0f0" stroke-width=".8"/></svg>
<div class="a" style="left:1197px;top:587px;width:37px;height:37px;background:radial-gradient(circle at 50% 45%,#dcdcdc 0,#d2d2d2 60%,#bdbdbd 100%)"></div>
<svg style="left:1197px;top:587px" width="37" height="37" viewBox="0 0 37 37" class="clip"><path d="M8 25 Q10 32 20 31 Q28 29 37 25" stroke="url(#gg)" stroke-width="5" fill="none" stroke-linecap="round" opacity=".92"/><path d="M37 0 L28 8" stroke="#b09060" stroke-width="4.2"/><path d="M28.5 7.5 L20 16" stroke="#999" stroke-width="4"/><path d="M27.5 6 L19 14.5" stroke="#fff" stroke-width="1" opacity=".85"/><path d="M19.5 13 L22.5 17 Q17 23 11 24.5 Q10 24 11.5 21.5 Q14.5 16 19.5 13Z" fill="#3a2020"/><path d="M10 6 Q12 9 12 10.5 A2 2 0 0 1 8 10.5 Q8 9 10 6Z" fill="#3aa0f0"/><path d="M7 4.5 L8 6.5" stroke="#3aa0f0" stroke-width=".8"/></svg>
<div class="a" style="left:1080px;top:626px;width:37px;height:32px;background:radial-gradient(circle at 50% 45%,#dcdcdc 0,#d2d2d2 60%,#bdbdbd 100%)"></div>
<svg style="left:1080px;top:626px" width="37" height="32" viewBox="0 0 37 32" class="clip"><path d="M3 31 Q16 28 37 31" stroke="url(#gg2)" stroke-width="5" fill="none" stroke-linecap="round" opacity=".92"/><path d="M37 0 L29 8" stroke="#3a8ab8" stroke-width="5.5"/><path d="M30 7 L21 16" stroke="#9ab0b8" stroke-width="6.5"/><path d="M28 4.5 L19 13.5" stroke="#fff" stroke-width="1.4" opacity=".85"/><path d="M18 12 L25 19 Q21 25 16 25 Q11 24 11 20 Q12 15 18 12Z" fill="#3a2020"/><path d="M10 6 Q12 9 12 10.5 A2 2 0 0 1 8 10.5 Q8 9 10 6Z" fill="#3aa0f0"/><path d="M7 4.5 L8 6.5" stroke="#3aa0f0" stroke-width=".8"/></svg>
<div class="a" style="left:1119px;top:626px;width:37px;height:32px;background:radial-gradient(circle at 50% 45%,#dcdcdc 0,#d2d2d2 60%,#bdbdbd 100%)"></div>
<svg style="left:1119px;top:626px" width="37" height="32" viewBox="0 0 37 32" class="clip"><path d="M6 31 Q16 26 37 31" stroke="url(#gg)" stroke-width="2.8" fill="none" stroke-linecap="round" opacity=".92"/><path d="M37 0 L28 8" stroke="#2a78b0" stroke-width="3.4"/><path d="M28.5 7.5 L20 15" stroke="#c9b8dc" stroke-width="3"/><path d="M28 6.5 L19.5 14" stroke="#fff" stroke-width=".9" opacity=".8"/><path d="M21 13.5 L22 16.5 L14 21.5 Q11 22.5 12.5 20 Z" fill="#c89048"/><path d="M10 6 Q12 9 12 10.5 A2 2 0 0 1 8 10.5 Q8 9 10 6Z" fill="#3aa0f0"/><path d="M7 4.5 L8 6.5" stroke="#3aa0f0" stroke-width=".8"/></svg>
<div class="a" style="left:1158px;top:626px;width:37px;height:32px;background:radial-gradient(circle at 50% 45%,#dcdcdc 0,#d2d2d2 60%,#bdbdbd 100%)"></div>
<svg style="left:1158px;top:626px" width="37" height="32" viewBox="0 0 37 32" class="clip"><path d="M6 31 Q16 26 37 30" stroke="#6ad060" stroke-width="3.2" fill="none" stroke-linecap="round" opacity=".92"/><path d="M37 0 L28 8" stroke="#2a78b0" stroke-width="4.2"/><path d="M28.5 7.5 L20 16" stroke="#d0c4dc" stroke-width="4"/><path d="M27.5 6 L19 14.5" stroke="#fff" stroke-width="1" opacity=".85"/><path d="M19.5 13 L22.5 17 Q17 23 11 24.5 Q10 24 11.5 21.5 Q14.5 16 19.5 13Z" fill="#c89048"/><path d="M10 6 Q12 9 12 10.5 A2 2 0 0 1 8 10.5 Q8 9 10 6Z" fill="#3aa0f0"/><path d="M7 4.5 L8 6.5" stroke="#3aa0f0" stroke-width=".8"/></svg>
<div class="a" style="left:1197px;top:626px;width:37px;height:32px;background:radial-gradient(circle at 50% 45%,#dcdcdc 0,#d2d2d2 60%,#bdbdbd 100%)"></div>
<svg style="left:1197px;top:626px" width="37" height="32" viewBox="0 0 37 32" class="clip"><path d="M8 35 Q14 33 20 35" stroke="#fff" stroke-width="4" fill="none" stroke-linecap="round" opacity=".92"/><path d="M37 0 L29 8" stroke="#80b0e0" stroke-width="5.5"/><path d="M30 7 L21 16" stroke="#80b0e0" stroke-width="6.5"/><path d="M28 4.5 L19 13.5" stroke="#fff" stroke-width="1.4" opacity=".85"/><path d="M18 12 L25 19 Q21 25 16 25 Q11 24 11 20 Q12 15 18 12Z" fill="#f4f4f4"/><path d="M10 6 Q12 9 12 10.5 A2 2 0 0 1 8 10.5 Q8 9 10 6Z" fill="#3aa0f0"/><path d="M7 4.5 L8 6.5" stroke="#3aa0f0" stroke-width=".8"/></svg>
<div class="a" style="left:1238px;top:468px;width:10px;height:190px;background:#383838"></div>
<div class="a" style="left:1239px;top:469px;width:8px;height:9px;background:#444;border:1px solid #2f2f2f"></div>
<svg style="left:1239px;top:469px" width="8" height="9" viewBox="0 0 8 9" ><path d="M1.5 6 L4 3 L6.5 6Z" fill="#bbb"/></svg>
<div class="a" style="left:1239px;top:648px;width:8px;height:9px;background:#444;border:1px solid #2f2f2f"></div>
<svg style="left:1239px;top:648px" width="8" height="9" viewBox="0 0 8 9" ><path d="M1.5 3 L4 6 L6.5 3Z" fill="#bbb"/></svg>
<div class="a" style="left:1239px;top:479px;width:8px;height:90px;background:#3f3f3f;border:1px solid #333;border-radius:2px"></div>
<div class="a" style="left:1078px;top:659px;width:100px;height:18px;background:#3b3b3b;border-radius:0 0 3px 3px"></div>
<div class="t" style="left:1080px;top:659px;color:#7a7a7a;font-size:11px">Search</div>
<div class="a" style="left:1182px;top:662px;width:9px;height:9px;background:#3a3a3a"></div>
<svg style="left:1182px;top:662px" width="9" height="9" viewBox="0 0 9 9" ><path d="M1.5 4.5 L3.5 7 L7.5 1.5" fill="none" stroke="#e0e0e0" stroke-width="1.1"/></svg>
<div class="t" style="left:1194px;top:659.5px;font-size:11px;letter-spacing:-0.589px;color:#e6e6e6">Filter in Tag</div>
<div class="a" style="left:211px;top:71px;width:825px;height:564px;background:#2f3337"></div>
<div class="a" style="left:211px;top:71px;width:825px;height:24px;background:#475057"></div>
<div class="t" style="left:574px;top:76px;color:#f4f4f4;font-size:11.5px">Brush Editor — Krita</div>
<svg style="left:995px;top:79px" width="32" height="10" viewBox="0 0 32 10" ><path d="M1.5 2 L6 6.5 L10.5 2" stroke="#e8e8e8" fill="none" stroke-width="1.2"/><path d="M22 0.5 L29.5 8 M29.5 0.5 L22 8" stroke="#e8e8e8" stroke-width="1.2"/></svg>
<div class="a" style="left:212px;top:95px;width:823px;height:539px;background:#fff"></div>
<div class="a" style="left:215px;top:95px;width:817px;height:535px;background:#474747"></div>
<div class="a" style="left:215px;top:629px;width:817px;height:1px;background:#2d2d2d"></div>
<div class="a" style="left:222px;top:103px;width:36px;height:36px;background:radial-gradient(circle at 40% 40%,#dcdcdc,#cfcfcf);border:1px solid #e4e4e4"></div>
<svg style="left:222px;top:103px" width="36" height="36" viewBox="0 0 36 36" ><path d="M35 1 L31 5" stroke="#2a2a2a" stroke-width="3"/><path d="M31.5 4.5 L21 15" stroke="#cdb8e0" stroke-width="3.6"/><path d="M30.5 3.5 L20 14" stroke="#fafafa" stroke-width="1.2"/><path d="M22.5 12.5 L12 21 Q14 17 19.5 14 Z" fill="#4a1a18" stroke="#4a1a18" stroke-width="2.4" stroke-linejoin="round"/><path d="M11 21 Q10 26 14 26 Q18 26 20 24 Q22 29 25 29.5 Q31 28.5 36 23" stroke="#1e1e1e" stroke-width="2.2" fill="none"/><path d="M24 29 Q31 28 36 21.5 L36 28 Q30 32 24 31.5 Z" fill="#1e1e1e"/></svg>
<div class="a" style="left:263px;top:101px;width:208px;height:39px;border:1px solid #3b3b3b;background:#434343"></div>
<svg style="left:263px;top:101px" width="208" height="39" viewBox="0 0 208 39" ><path d="M25 21 C40 14 55 11 66 11 C92 11 115 23 140 24 C160 25 175 17 184 9 A5.5 5.5 0 0 1 194 14 C186 25 165 33 140 33 C112 33 92 17 66 13 C50 13 38 16 25 21 Z" fill="#d2d2d2"/></svg>
<div class="t" style="left:477.5px;top:102px;font-size:9.5px;letter-spacing:-0.643px;font-weight:bold;color:#e6e6e6">b) Basic-5 Size</div>
<div class="a" style="left:480px;top:123px;width:11px;height:11px;border-radius:50%;background:#d8d8d8"></div>
<div class="t" style="left:498px;top:121px;font-size:11px;letter-spacing:-0.221px;color:#e6e6e6">Pixel Engine</div>
<div class="a" style="left:671px;top:102px;width:15px;height:15px;background:#3f3f3f;border:1px solid #363636;border-radius:2px"></div>
<svg style="left:671px;top:102px" width="15" height="15" viewBox="0 0 15 15" ><path d="M4 11 L4.5 8.5 L9.5 3.5 L11.5 5.5 L6.5 10.5 Z" fill="none" stroke="#eee" stroke-width="1.1"/></svg>
<div class="a" style="left:901px;top:103px;width:125px;height:17px;background:linear-gradient(#4b4b4b,#454545);border:1px solid #555;border-radius:3px"></div>
<div class="t" style="left:903px;top:104px;font-size:11px;letter-spacing:-0.353px;color:#eaeaea"><u>S</u>ave New Brush Preset…</div>
<div class="a" style="left:901px;top:122px;width:125px;height:17px;background:#464646;border:1px solid #505050;border-radius:3px"></div>
<div class="t" style="left:907px;top:123px;font-size:11px;letter-spacing:-0.032px;color:#7c7c7c"><u>O</u>verwrite Brush Preset</div>
<div class="a" style="left:222px;top:162px;width:30px;height:463px;border:1px solid #505050;border-radius:3px"></div>
<div class="a" style="left:257px;top:162px;width:593px;height:463px;border:1px solid #505050;border-radius:3px"></div>
<div class="a" style="left:855px;top:162px;width:172px;height:463px;border:1px solid #505050;border-radius:3px"></div>
<div class="a" style="left:229px;top:170px;width:15px;height:15px;background:#424242;border:1px solid #3a3a3a;border-radius:2px"></div>
<svg style="left:229px;top:170px" width="15" height="15" viewBox="0 0 15 15" ><path d="M9 4 L5.5 7.5 L9 11" stroke="#ddd" fill="none" stroke-width="1.2"/></svg>
<div class="a" style="left:272px;top:175px;width:124px;height:399px;background:#383838;border:1px solid #8a8a8a"></div>
<div class="a" style="left:273px;top:176px;width:113px;height:397px;overflow:hidden">
<div class="a" style="left:0;top:0px;width:113px;height:15px;background:#3c3c3c"></div>
<svg style="left:4px;top:4px" width="8" height="8" viewBox="0 0 8 8"><path d="M0 0.5 H8 L4 7.5Z" fill="#f0f0f0"/></svg>
<div class="t" style="left:0;top:0px;width:113px;text-align:center;color:#eaeaea;font-size:11px;padding-left:0px">General</div>
<div class="t" style="left:1px;top:15px;color:#e8e8e8;font-size:11px">Brush Tip</div>
<svg style="left:102px;top:17px" width="10" height="11" viewBox="0 0 10 11"><rect x="0" y="5" width="10" height="6" fill="#555"/><path d="M5.5 5 V3 A2.3 2.3 0 0 1 9.5 2.5" fill="none" stroke="#555" stroke-width="1.3"/></svg>
<div class="t" style="left:1px;top:30px;color:#e8e8e8;font-size:11px">Blending Mode</div>
<svg style="left:102px;top:32px" width="10" height="11" viewBox="0 0 10 11"><rect x="0" y="5" width="10" height="6" fill="#555"/><path d="M5.5 5 V3 A2.3 2.3 0 0 1 9.5 2.5" fill="none" stroke="#555" stroke-width="1.3"/></svg>
<div class="t" style="left:1px;top:45px;color:#e8e8e8;font-size:11px">Opacity</div>
<svg style="left:102px;top:47px" width="10" height="11" viewBox="0 0 10 11"><rect x="0" y="5" width="10" height="6" fill="#555"/><path d="M5.5 5 V3 A2.3 2.3 0 0 1 9.5 2.5" fill="none" stroke="#555" stroke-width="1.3"/></svg>
<div class="t" style="left:1px;top:60px;color:#e8e8e8;font-size:11px">Flow</div>
<svg style="left:102px;top:62px" width="10" height="11" viewBox="0 0 10 11"><rect x="0" y="5" width="10" height="6" fill="#555"/><path d="M5.5 5 V3 A2.3 2.3 0 0 1 9.5 2.5" fill="none" stroke="#555" stroke-width="1.3"/></svg>
<div class="a" style="left:1px;top:78px;width:10px;height:10px;border:1px solid #9a9a9a;background:#383838"></div>
<svg style="left:1px;top:78px" width="10" height="10" viewBox="0 0 10 10"><path d="M2 5 L4 7.5 L8.5 1.5" fill="none" stroke="#eee" stroke-width="1.1"/></svg>
<div class="t" style="left:15px;top:75px;color:#e8e8e8;font-size:11px">Size</div>
<svg style="left:102px;top:77px" width="10" height="11" viewBox="0 0 10 11"><rect x="0" y="5" width="10" height="6" fill="#555"/><path d="M5.5 5 V3 A2.3 2.3 0 0 1 9.5 2.5" fill="none" stroke="#555" stroke-width="1.3"/></svg>
<div class="a" style="left:1px;top:93px;width:10px;height:10px;border:1px solid #9a9a9a;background:#383838"></div>
<div class="t" style="left:15px;top:90px;color:#e8e8e8;font-size:11px">Ratio</div>
<svg style="left:102px;top:92px" width="10" height="11" viewBox="0 0 10 11"><rect x="0" y="5" width="10" height="6" fill="#555"/><path d="M5.5 5 V3 A2.3 2.3 0 0 1 9.5 2.5" fill="none" stroke="#555" stroke-width="1.3"/></svg>
<div class="a" style="left:1px;top:108px;width:10px;height:10px;border:1px solid #9a9a9a;background:#383838"></div>
<div class="t" style="left:15px;top:105px;color:#e8e8e8;font-size:11px">Spacing</div>
<svg style="left:102px;top:107px" width="10" height="11" viewBox="0 0 10 11"><rect x="0" y="5" width="10" height="6" fill="#555"/><path d="M5.5 5 V3 A2.3 2.3 0 0 1 9.5 2.5" fill="none" stroke="#555" stroke-width="1.3"/></svg>
<div class="a" style="left:1px;top:123px;width:10px;height:10px;border:1px solid #9a9a9a;background:#383838"></div>
<div class="t" style="left:15px;top:120px;color:#e8e8e8;font-size:11px">Mirror</div>
<svg style="left:102px;top:122px" width="10" height="11" viewBox="0 0 10 11"><rect x="0" y="5" width="10" height="6" fill="#555"/><path d="M5.5 5 V3 A2.3 2.3 0 0 1 9.5 2.5" fill="none" stroke="#555" stroke-width="1.3"/></svg>
<div class="a" style="left:1px;top:138px;width:10px;height:10px;border:1px solid #9a9a9a;background:#383838"></div>
<div class="t" style="left:15px;top:135px;color:#e8e8e8;font-size:11px">Softness</div>
<svg style="left:102px;top:137px" width="10" height="11" viewBox="0 0 10 11"><rect x="0" y="5" width="10" height="6" fill="#555"/><path d="M5.5 5 V3 A2.3 2.3 0 0 1 9.5 2.5" fill="none" stroke="#555" stroke-width="1.3"/></svg>
<div class="a" style="left:1px;top:153px;width:10px;height:10px;border:1px solid #9a9a9a;background:#383838"></div>
<div class="t" style="left:15px;top:150px;color:#e8e8e8;font-size:11px">Sharpness</div>
<svg style="left:102px;top:152px" width="10" height="11" viewBox="0 0 10 11"><rect x="0" y="5" width="10" height="6" fill="#555"/><path d="M5.5 5 V3 A2.3 2.3 0 0 1 9.5 2.5" fill="none" stroke="#555" stroke-width="1.3"/></svg>
<div class="a" style="left:1px;top:168px;width:10px;height:10px;border:1px solid #9a9a9a;background:#383838"></div>
<div class="t" style="left:15px;top:165px;color:#e8e8e8;font-size:11px">Rotation</div>
<svg style="left:102px;top:167px" width="10" height="11" viewBox="0 0 10 11"><rect x="0" y="5" width="10" height="6" fill="#555"/><path d="M5.5 5 V3 A2.3 2.3 0 0 1 9.5 2.5" fill="none" stroke="#555" stroke-width="1.3"/></svg>
<div class="a" style="left:1px;top:183px;width:10px;height:10px;border:1px solid #9a9a9a;background:#383838"></div>
<div class="t" style="left:15px;top:180px;color:#e8e8e8;font-size:11px">Lightness Stre…</div>
<svg style="left:102px;top:182px" width="10" height="11" viewBox="0 0 10 11"><rect x="0" y="5" width="10" height="6" fill="#555"/><path d="M5.5 5 V3 A2.3 2.3 0 0 1 9.5 2.5" fill="none" stroke="#555" stroke-width="1.3"/></svg>
<div class="a" style="left:1px;top:198px;width:10px;height:10px;border:1px solid #9a9a9a;background:#383838"></div>
<div class="t" style="left:15px;top:195px;color:#e8e8e8;font-size:11px">Scatter</div>
<svg style="left:102px;top:197px" width="10" height="11" viewBox="0 0 10 11"><rect x="0" y="5" width="10" height="6" fill="#555"/><path d="M5.5 5 V3 A2.3 2.3 0 0 1 9.5 2.5" fill="none" stroke="#555" stroke-width="1.3"/></svg>
<div class="a" style="left:0;top:210px;width:113px;height:15px;background:#3c3c3c"></div>
<svg style="left:4px;top:214px" width="8" height="8" viewBox="0 0 8 8"><path d="M0 0.5 H8 L4 7.5Z" fill="#f0f0f0"/></svg>
<div class="t" style="left:0;top:210px;width:113px;text-align:center;color:#eaeaea;font-size:11px;padding-left:0px">Color</div>
<div class="t" style="left:1px;top:224px;color:#e8e8e8;font-size:11px">Source</div>
<svg style="left:102px;top:226px" width="10" height="11" viewBox="0 0 10 11"><rect x="0" y="5" width="10" height="6" fill="#555"/><path d="M5.5 5 V3 A2.3 2.3 0 0 1 9.5 2.5" fill="none" stroke="#555" stroke-width="1.3"/></svg>
<div class="a" style="left:1px;top:242px;width:10px;height:10px;border:1px solid #9a9a9a;background:#383838"></div>
<div class="t" style="left:15px;top:239px;color:#e8e8e8;font-size:11px">Darken</div>
<svg style="left:102px;top:241px" width="10" height="11" viewBox="0 0 10 11"><rect x="0" y="5" width="10" height="6" fill="#555"/><path d="M5.5 5 V3 A2.3 2.3 0 0 1 9.5 2.5" fill="none" stroke="#555" stroke-width="1.3"/></svg>
<div class="a" style="left:1px;top:257px;width:10px;height:10px;border:1px solid #9a9a9a;background:#383838"></div>
<div class="t" style="left:15px;top:254px;color:#e8e8e8;font-size:11px">Mix</div>
<svg style="left:102px;top:256px" width="10" height="11" viewBox="0 0 10 11"><rect x="0" y="5" width="10" height="6" fill="#555"/><path d="M5.5 5 V3 A2.3 2.3 0 0 1 9.5 2.5" fill="none" stroke="#555" stroke-width="1.3"/></svg>
<div class="a" style="left:1px;top:272px;width:10px;height:10px;border:1px solid #9a9a9a;background:#383838"></div>
<div class="t" style="left:15px;top:269px;color:#e8e8e8;font-size:11px">Hue</div>
<svg style="left:102px;top:271px" width="10" height="11" viewBox="0 0 10 11"><rect x="0" y="5" width="10" height="6" fill="#555"/><path d="M5.5 5 V3 A2.3 2.3 0 0 1 9.5 2.5" fill="none" stroke="#555" stroke-width="1.3"/></svg>
<div class="a" style="left:1px;top:287px;width:10px;height:10px;border:1px solid #9a9a9a;background:#383838"></div>
<div class="t" style="left:15px;top:284px;color:#e8e8e8;font-size:11px">Saturation</div>
<svg style="left:102px;top:286px" width="10" height="11" viewBox="0 0 10 11"><rect x="0" y="5" width="10" height="6" fill="#555"/><path d="M5.5 5 V3 A2.3 2.3 0 0 1 9.5 2.5" fill="none" stroke="#555" stroke-width="1.3"/></svg>
<div class="a" style="left:1px;top:302px;width:10px;height:10px;border:1px solid #9a9a9a;background:#383838"></div>
<div class="t" style="left:15px;top:299px;color:#e8e8e8;font-size:11px">Value</div>
<svg style="left:102px;top:301px" width="10" height="11" viewBox="0 0 10 11"><rect x="0" y="5" width="10" height="6" fill="#555"/><path d="M5.5 5 V3 A2.3 2.3 0 0 1 9.5 2.5" fill="none" stroke="#555" stroke-width="1.3"/></svg>
<div class="a" style="left:1px;top:317px;width:10px;height:10px;border:1px solid #9a9a9a;background:#383838"></div>
<div class="t" style="left:15px;top:314px;color:#e8e8e8;font-size:11px">Airbrush</div>
<svg style="left:102px;top:316px" width="10" height="11" viewBox="0 0 10 11"><rect x="0" y="5" width="10" height="6" fill="#555"/><path d="M5.5 5 V3 A2.3 2.3 0 0 1 9.5 2.5" fill="none" stroke="#555" stroke-width="1.3"/></svg>
<div class="a" style="left:1px;top:332px;width:10px;height:10px;border:1px solid #9a9a9a;background:#383838"></div>
<div class="t" style="left:15px;top:329px;color:#e8e8e8;font-size:11px">Rate</div>
<svg style="left:102px;top:331px" width="10" height="11" viewBox="0 0 10 11"><rect x="0" y="5" width="10" height="6" fill="#555"/><path d="M5.5 5 V3 A2.3 2.3 0 0 1 9.5 2.5" fill="none" stroke="#555" stroke-width="1.3"/></svg>
<div class="t" style="left:1px;top:344px;color:#e8e8e8;font-size:11px">Painting Mode</div>
<svg style="left:102px;top:346px" width="10" height="11" viewBox="0 0 10 11"><rect x="0" y="5" width="10" height="6" fill="#555"/><path d="M5.5 5 V3 A2.3 2.3 0 0 1 9.5 2.5" fill="none" stroke="#555" stroke-width="1.3"/></svg>
<div class="a" style="left:0;top:359px;width:113px;height:15px;background:#3c3c3c"></div>
<svg style="left:4px;top:363px" width="8" height="8" viewBox="0 0 8 8"><path d="M0 0.5 H8 L4 7.5Z" fill="#f0f0f0"/></svg>
<div class="t" style="left:0;top:359px;width:113px;text-align:center;color:#eaeaea;font-size:11px;padding-left:0px">Texture</div>
<div class="a" style="left:1px;top:377px;width:10px;height:10px;border:1px solid #9a9a9a;background:#383838"></div>
<div class="t" style="left:15px;top:374px;color:#e8e8e8;font-size:11px">Pattern</div>
<svg style="left:102px;top:376px" width="10" height="11" viewBox="0 0 10 11"><rect x="0" y="5" width="10" height="6" fill="#555"/><path d="M5.5 5 V3 A2.3 2.3 0 0 1 9.5 2.5" fill="none" stroke="#555" stroke-width="1.3"/></svg>
<div class="a" style="left:1px;top:392px;width:10px;height:10px;border:1px solid #9a9a9a;background:#383838"></div>
<svg style="left:1px;top:392px" width="10" height="10" viewBox="0 0 10 10"><path d="M2 5 L4 7.5 L8.5 1.5" fill="none" stroke="#eee" stroke-width="1.1"/></svg>
<div class="t" style="left:15px;top:389px;color:#e8e8e8;font-size:11px">Strength</div>
<svg style="left:102px;top:391px" width="10" height="11" viewBox="0 0 10 11"><rect x="0" y="5" width="10" height="6" fill="#555"/><path d="M5.5 5 V3 A2.3 2.3 0 0 1 9.5 2.5" fill="none" stroke="#555" stroke-width="1.3"/></svg>
</div>
<div class="a" style="left:386px;top:176px;width:9px;height:397px;background:#3a3a3a;border-left:1px solid #8a8a8a"></div>
<div class="a" style="left:387px;top:176px;width:8px;height:9px;background:#3c3c3c;border-bottom:1px solid #8a8a8a"></div>
<svg style="left:387px;top:176px" width="8" height="9" viewBox="0 0 8 9" ><path d="M1.5 6 L4 3 L6.5 6Z" fill="#ddd"/></svg>
<div class="a" style="left:387px;top:185px;width:8px;height:280px;background:#3e3e3e;border-bottom:1px solid #8a8a8a"></div>
<div class="a" style="left:387px;top:563px;width:8px;height:10px;background:#3c3c3c;border-top:1px solid #8a8a8a"></div>
<svg style="left:387px;top:563px" width="8" height="10" viewBox="0 0 8 10" ><path d="M1.5 3.5 L4 6.5 L6.5 3.5Z" fill="#ddd"/></svg>
<div class="a" style="left:401px;top:177px;width:128px;height:18px;background:#404040;border:1px solid #363636;border-radius:2px"></div>
<div class="a" style="left:401px;top:177px;width:33px;height:18px;background:#4f6379;border-radius:2px 0 0 2px"></div>
<div class="a" style="left:498px;top:178px;width:1px;height:16px;background:#363636"></div>
<div class="a" style="left:434px;top:178px;width:1px;height:16px;background:#363636"></div>
<div class="t" style="left:406px;top:178px;font-size:11px;letter-spacing:0.093px;color:#e8e8e8"><u>A</u>uto</div>
<div class="t" style="left:440px;top:178px;font-size:11px;letter-spacing:-0.020px;color:#e8e8e8"><u>P</u>redefined</div>
<div class="t" style="left:503px;top:178px;font-size:11px;letter-spacing:0.207px;color:#e8e8e8"><u>T</u>ext</div>
<div class="a" style="left:400px;top:200px;width:408px;height:350px;border:1px solid #3e3e3e;border-radius:2px"></div>
<div class="a" style="left:407px;top:207px;width:70px;height:71px;background:linear-gradient(#4a4a4a,#404040);border:1px solid #3a3a3a;border-radius:2px"></div>
<div class="a" style="left:429px;top:229px;width:26px;height:26px;border-radius:50%;background:#000"></div>
<div class="t" style="left:407px;top:283px;color:#e6e6e6;font-size:11px">Mask Type:</div>
<div class="a" style="left:407px;top:304px;width:70px;height:19px;background:linear-gradient(#494949,#434343);border:1px solid #555;border-radius:3px"></div>
<div class="t" style="left:410px;top:305.5px;color:#e6e6e6;font-size:11px">Default</div>
<svg style="left:466px;top:312.5px" width="5" height="3" viewBox="0 0 5 3" ><path d="M0 0 H5 L2.5 2.5Z" fill="#cfcfcf"/></svg>
<div class="t" style="left:407px;top:329px;color:#e6e6e6;font-size:11px">Shape:</div>
<div class="a" style="left:407px;top:350px;width:70px;height:19px;background:linear-gradient(#494949,#434343);border:1px solid #555;border-radius:3px"></div>
<div class="t" style="left:410px;top:351.5px;color:#e6e6e6;font-size:11px">Circle</div>
<svg style="left:466px;top:358.5px" width="5" height="3" viewBox="0 0 5 3" ><path d="M0 0 H5 L2.5 2.5Z" fill="#cfcfcf"/></svg>
<div class="a" style="left:407px;top:380px;width:8px;height:9px;background:#3a3a3a"></div>
<svg style="left:407px;top:380px" width="9" height="9" viewBox="0 0 9 9" ><path d="M1.5 4.5 L3.5 7 L7.5 1.5" fill="none" stroke="#e8e8e8" stroke-width="1.1"/></svg>
<div class="t" style="left:418px;top:376px;font-size:11px;letter-spacing:-0.024px;color:#e8e8e8">A<u>n</u>ti-alias</div>
<div class="t" style="left:500.3234375px;top:210px;color:#dedede;font-size:11px;width:47.6765625px;text-align:right">Diameter:</div>
<div class="a" style="left:553px;top:208px;width:239px;height:18px;background:#383838;border-radius:2px 0 0 2px;box-shadow:inset 0 1px 0 #2e2e2e"></div>
<div class="a" style="left:553px;top:208px;width:81px;height:18px;background:#56718d;border-radius:2px 0 0 2px"></div>
<div class="t" style="left:651.5px;top:210.0px;color:#e8e8e8;font-size:11px;letter-spacing:-0.150px">40,00 px</div>
<div class="a" style="left:792px;top:208px;width:9px;height:18px;background:#363636;border:1px solid #4a4a4a;border-left:1px solid #2e2e2e;border-radius:0 3px 3px 0"></div>
<svg style="left:792px;top:208px" width="9" height="18" viewBox="0 0 9 18" ><path d="M2.0 6.4 L4.5 3.9000000000000004 L7.0 6.4Z" fill="#bdbdbd"/><path d="M2.0 11.600000000000001 L4.5 14.100000000000001 L7.0 11.600000000000001Z" fill="#bdbdbd"/></svg>
<div class="t" style="left:519.265625px;top:235px;color:#dedede;font-size:11px;width:28.734375px;text-align:right">Ratio:</div>
<div class="a" style="left:553px;top:233px;width:239px;height:18px;background:#383838;border-radius:2px 0 0 2px;box-shadow:inset 0 1px 0 #2e2e2e"></div>
<div class="a" style="left:553px;top:233px;width:239px;height:18px;background:#56718d;border-radius:2px 0 0 2px"></div>
<div class="t" style="left:553px;top:235.0px;width:239px;text-align:center;color:#e8e8e8;font-size:11px;letter-spacing:-0.352px">1,00</div>
<div class="a" style="left:792px;top:233px;width:9px;height:18px;background:#363636;border:1px solid #4a4a4a;border-left:1px solid #2e2e2e;border-radius:0 3px 3px 0"></div>
<svg style="left:792px;top:233px" width="9" height="18" viewBox="0 0 9 18" ><path d="M2.0 6.4 L4.5 3.9000000000000004 L7.0 6.4Z" fill="#bdbdbd"/><path d="M2.0 11.600000000000001 L4.5 14.100000000000001 L7.0 11.600000000000001Z" fill="#bdbdbd"/></svg>
<div class="t" style="left:488px;top:263px;color:#e6e6e6;font-size:11px">Fade</div>
<div class="a" style="left:488px;top:279px;width:307px;height:61px;border:1px solid #3e3e3e;border-radius:2px"></div>
<div class="t" style="left:493.425px;top:290px;color:#dedede;font-size:11px;width:52.575px;text-align:right">Horizontal:</div>
<div class="a" style="left:551px;top:288px;width:211px;height:18px;background:#383838;border-radius:2px 0 0 2px;box-shadow:inset 0 1px 0 #2e2e2e"></div>
<div class="a" style="left:551px;top:288px;width:211px;height:18px;background:#56718d;border-radius:2px 0 0 2px"></div>
<div class="t" style="left:551px;top:290.0px;width:211px;text-align:center;color:#e8e8e8;font-size:11px;letter-spacing:-0.352px">1,00</div>
<div class="a" style="left:762px;top:288px;width:9px;height:18px;background:#363636;border:1px solid #4a4a4a;border-left:1px solid #2e2e2e;border-radius:0 3px 3px 0"></div>
<svg style="left:762px;top:288px" width="9" height="18" viewBox="0 0 9 18" ><path d="M2.0 6.4 L4.5 3.9000000000000004 L7.0 6.4Z" fill="#bdbdbd"/><path d="M2.0 11.600000000000001 L4.5 14.100000000000001 L7.0 11.600000000000001Z" fill="#bdbdbd"/></svg>
<div class="t" style="left:506.871875px;top:315px;color:#dedede;font-size:11px;width:39.128125px;text-align:right">Vertical:</div>
<div class="a" style="left:551px;top:313px;width:211px;height:18px;background:#383838;border-radius:2px 0 0 2px;box-shadow:inset 0 1px 0 #2e2e2e"></div>
<div class="a" style="left:551px;top:313px;width:211px;height:18px;background:#56718d;border-radius:2px 0 0 2px"></div>
<div class="t" style="left:551px;top:315.0px;width:211px;text-align:center;color:#e8e8e8;font-size:11px;letter-spacing:-0.352px">1,00</div>
<div class="a" style="left:762px;top:313px;width:9px;height:18px;background:#363636;border:1px solid #4a4a4a;border-left:1px solid #2e2e2e;border-radius:0 3px 3px 0"></div>
<svg style="left:762px;top:313px" width="9" height="18" viewBox="0 0 9 18" ><path d="M2.0 6.4 L4.5 3.9000000000000004 L7.0 6.4Z" fill="#bdbdbd"/><path d="M2.0 11.600000000000001 L4.5 14.100000000000001 L7.0 11.600000000000001Z" fill="#bdbdbd"/></svg>
<svg style="left:777px;top:302px" width="8" height="14" viewBox="0 0 8 14" ><rect x="1.5" y="0.8" width="5" height="6" rx="2.5" fill="none" stroke="#ddd" stroke-width="1.1"/><rect x="1.5" y="7.2" width="5" height="6" rx="2.5" fill="none" stroke="#ddd" stroke-width="1.1"/></svg>
<div class="t" style="left:516.8109375px;top:352px;color:#dedede;font-size:11px;width:31.1890625px;text-align:right">Angle:</div>
<svg style="left:553px;top:351px" width="18" height="18" viewBox="0 0 18 18" ><circle cx="9" cy="9" r="8.8" fill="#313131" stroke="#2a2a2a" stroke-width=".5"/><path d="M9 2 V16 M2 9 H16" stroke="#3e3e3e" stroke-width=".8" stroke-dasharray="1 1.5"/><path d="M9 9 H18" stroke="#eee" stroke-width="1"/><rect x="8" y="8" width="2" height="2" fill="#fff"/><rect x="17" y="8" width="2" height="2" fill="#fff"/></svg>
<div class="a" style="left:575px;top:350px;width:45px;height:19px;background:#363636;border:1px solid #303030;border-radius:3px 0 0 3px"></div>
<div class="t" style="left:575px;top:351.5px;color:#e8e8e8;font-size:11.5px;width:42px;text-align:right">0°</div>
<div class="a" style="left:620px;top:350px;width:9px;height:19px;background:#363636;border:1px solid #4a4a4a;border-left:1px solid #2e2e2e;border-radius:0 3px 3px 0"></div>
<svg style="left:620px;top:350px" width="9" height="19" viewBox="0 0 9 19" ><path d="M2.0 6.9 L4.5 4.4 L7.0 6.9Z" fill="#bdbdbd"/><path d="M2.0 12.100000000000001 L4.5 14.600000000000001 L7.0 12.100000000000001Z" fill="#bdbdbd"/></svg>
<svg style="left:634px;top:352px" width="14" height="15" viewBox="0 0 14 15" ><circle cx="7" cy="7.5" r="6.3" fill="none" stroke="#d8d8d8" stroke-width="1"/><path d="M7 2 V13 M1.5 7.5 H12.5" stroke="#555" stroke-width=".6" stroke-dasharray="1 1"/><path d="M2.5 3.5 L7 8 L11.5 3.5" stroke="#f0f0f0" fill="none" stroke-width="1.1"/><circle cx="7" cy="8" r="1.2" fill="#fff"/><circle cx="2.5" cy="3.5" r="1" fill="#fff"/><circle cx="11.5" cy="3.5" r="1" fill="#fff"/></svg>
<svg style="left:653px;top:352px" width="14" height="15" viewBox="0 0 14 15" ><circle cx="7" cy="7.5" r="6.3" fill="none" stroke="#d8d8d8" stroke-width="1"/><path d="M7 2 V13 M1.5 7.5 H12.5" stroke="#555" stroke-width=".6" stroke-dasharray="1 1"/><path d="M11 3 L5 7.5 L11 12" stroke="#f0f0f0" fill="none" stroke-width="1.1"/><circle cx="5" cy="7.5" r="1.2" fill="#fff"/><circle cx="11" cy="3" r="1" fill="#fff"/><circle cx="11" cy="12" r="1" fill="#fff"/></svg>
<svg style="left:672px;top:352px" width="14" height="15" viewBox="0 0 14 15" ><circle cx="7" cy="7.5" r="6.3" fill="none" stroke="#d8d8d8" stroke-width="1"/><path d="M7 2 V13 M1.5 7.5 H12.5" stroke="#555" stroke-width=".6" stroke-dasharray="1 1"/><path d="M2.5 12 L11.5 3" stroke="#f0f0f0" fill="none" stroke-width="1.1"/><circle cx="2.5" cy="12" r="1" fill="#fff"/><circle cx="11.5" cy="3" r="1" fill="#fff"/><circle cx="7" cy="7.5" r="1" fill="#fff"/></svg>
<div class="t" style="left:511.928125px;top:377px;color:#dedede;font-size:11px;width:36.071875px;text-align:right">Spikes:</div>
<div class="a" style="left:552px;top:375px;width:239px;height:19px;background:#393939;border-radius:2px 0 0 2px;box-shadow:inset 0 1px 0 #2e2e2e"></div>
<div class="t" style="left:552px;top:377.5px;width:239px;text-align:center;color:#e8e8e8;font-size:11px;letter-spacing:0.000px">2</div>
<div class="a" style="left:791px;top:375px;width:10px;height:19px;background:#363636;border:1px solid #4a4a4a;border-left:1px solid #2e2e2e;border-radius:0 3px 3px 0"></div>
<svg style="left:791px;top:375px" width="10" height="19" viewBox="0 0 10 19" ><path d="M2.5 6.9 L5.0 4.4 L7.5 6.9Z" fill="#bdbdbd"/><path d="M2.5 12.100000000000001 L5.0 14.600000000000001 L7.5 12.100000000000001Z" fill="#bdbdbd"/></svg>
<div class="t" style="left:480.134375px;top:402px;color:#dedede;font-size:11px;width:67.865625px;text-align:right">Randomness:</div>
<div class="a" style="left:552px;top:400px;width:239px;height:18px;background:#393939;border-radius:2px 0 0 2px;box-shadow:inset 0 1px 0 #2e2e2e"></div>
<div class="t" style="left:552px;top:402.0px;width:239px;text-align:center;color:#e8e8e8;font-size:11px;letter-spacing:0.000px">0</div>
<div class="a" style="left:791px;top:400px;width:10px;height:18px;background:#363636;border:1px solid #4a4a4a;border-left:1px solid #2e2e2e;border-radius:0 3px 3px 0"></div>
<svg style="left:791px;top:400px" width="10" height="18" viewBox="0 0 10 18" ><path d="M2.5 6.4 L5.0 3.9000000000000004 L7.5 6.4Z" fill="#bdbdbd"/><path d="M2.5 11.600000000000001 L5.0 14.100000000000001 L7.5 11.600000000000001Z" fill="#bdbdbd"/></svg>
<div class="t" style="left:508.265625px;top:427px;color:#dedede;font-size:11px;width:39.734375px;text-align:right">Density:</div>
<div class="a" style="left:552px;top:424px;width:239px;height:18px;background:#383838;border-radius:2px 0 0 2px;box-shadow:inset 0 1px 0 #2e2e2e"></div>
<div class="a" style="left:552px;top:424px;width:239px;height:18px;background:#56718d;border-radius:2px 0 0 2px"></div>
<div class="t" style="left:552px;top:426.0px;width:239px;text-align:center;color:#e8e8e8;font-size:11px;letter-spacing:-0.533px">100%</div>
<div class="a" style="left:791px;top:424px;width:10px;height:18px;background:#363636;border:1px solid #4a4a4a;border-left:1px solid #2e2e2e;border-radius:0 3px 3px 0"></div>
<svg style="left:791px;top:424px" width="10" height="18" viewBox="0 0 10 18" ><path d="M2.5 6.4 L5.0 3.9000000000000004 L7.5 6.4Z" fill="#bdbdbd"/><path d="M2.5 11.600000000000001 L5.0 14.100000000000001 L7.5 11.600000000000001Z" fill="#bdbdbd"/></svg>
<div class="t" style="left:505.19375px;top:451px;color:#dedede;font-size:11px;width:42.80625px;text-align:right">Spacing:</div>
<div class="a" style="left:553px;top:454px;width:8px;height:9px;background:#3a3a3a"></div>
<svg style="left:553px;top:454px" width="9" height="9" viewBox="0 0 9 9" ><path d="M1.5 4.5 L3.5 7 L7.5 1.5" fill="none" stroke="#e8e8e8" stroke-width="1.1"/></svg>
<div class="t" style="left:565px;top:451px;font-size:11px;letter-spacing:0.093px;color:#e8e8e8">A<u>u</u>to</div>
<div class="a" style="left:596px;top:449px;width:195px;height:18px;background:#393939;border-radius:2px 0 0 2px;box-shadow:inset 0 1px 0 #2e2e2e"></div>
<div class="a" style="left:596px;top:449px;width:84px;height:18px;background:#56718d;border-radius:2px 0 0 2px"></div>
<div class="t" style="left:684px;top:451.0px;color:#e8e8e8;font-size:11px;letter-spacing:-0.227px">0,80</div>
<div class="a" style="left:791px;top:449px;width:10px;height:18px;background:#363636;border:1px solid #4a4a4a;border-left:1px solid #2e2e2e;border-radius:0 3px 3px 0"></div>
<svg style="left:791px;top:449px" width="10" height="18" viewBox="0 0 10 18" ><path d="M2.5 6.4 L5.0 3.9000000000000004 L7.5 6.4Z" fill="#bdbdbd"/><path d="M2.5 11.600000000000001 L5.0 14.100000000000001 L7.5 11.600000000000001Z" fill="#bdbdbd"/></svg>
<div class="a" style="left:400px;top:559px;width:9px;height:9px;background:#3a3a3a"></div>
<svg style="left:400px;top:559px" width="9" height="9" viewBox="0 0 9 9" ><path d="M1.5 4.5 L3.5 7 L7.5 1.5" fill="none" stroke="#e8e8e8" stroke-width="1.1"/></svg>
<div class="t" style="left:412px;top:556px;font-size:11px;letter-spacing:0.093px;color:#e8e8e8">Auto</div>
<div class="t" style="left:444px;top:556px;font-size:11px;letter-spacing:-0.130px;color:#858585">Precision:</div>
<div class="a" style="left:495px;top:554px;width:302px;height:19px;background:#424242;border:1px solid #393939;border-radius:2px 0 0 2px"></div>
<div class="t" style="left:495px;top:556px;width:302px;text-align:center;color:#7e7e7e;font-size:11px">5</div>
<div class="a" style="left:797px;top:554px;width:10px;height:19px;background:#424242;border:1px solid #393939;border-left:none"></div>
<svg style="left:797px;top:554px" width="10" height="19" viewBox="0 0 10 19" ><path d="M2.5 7 L5 4.5 L7.5 7Z M2.5 12 L5 14.5 L7.5 12Z" fill="#666"/></svg>
<div class="a" style="left:263px;top:597px;width:9px;height:9px;background:#3e3e3e"></div>
<div class="t" style="left:276px;top:594px;font-size:11px;letter-spacing:-0.202px;color:#e8e8e8"><u>E</u>raser switch size</div>
<div class="a" style="left:369px;top:597px;width:9px;height:9px;background:#3e3e3e"></div>
<div class="t" style="left:381px;top:594px;font-size:11px;letter-spacing:-0.044px;color:#e8e8e8">E<u>r</u>aser switch opacity</div>
<div class="a" style="left:491px;top:597px;width:9px;height:9px;background:#3e3e3e"></div>
<svg style="left:491px;top:597px" width="9" height="9" viewBox="0 0 9 9" ><path d="M1.5 4.5 L3.5 7 L7.5 1.5" fill="none" stroke="#e8e8e8" stroke-width="1.1"/></svg>
<div class="t" style="left:503px;top:594px;font-size:11px;letter-spacing:-0.145px;color:#e8e8e8">Te<u>m</u>porarily Save Tweaks To Presets</div>
<div class="a" style="left:717px;top:597px;width:9px;height:9px;background:#3e3e3e"></div>
<svg style="left:717px;top:597px" width="9" height="9" viewBox="0 0 9 9" ><path d="M1.5 4.5 L3.5 7 L7.5 1.5" fill="none" stroke="#e8e8e8" stroke-width="1.1"/></svg>
<div class="t" style="left:729px;top:594px;font-size:11px;letter-spacing:0.053px;color:#e8e8e8"><span style="text-decoration:line-through"><u>I</u>nstant Preview</span></div>
<div class="a" style="left:817px;top:592px;width:24px;height:17px;background:#424242;border:1px solid #383838;border-radius:2px"></div>
<svg style="left:823px;top:597px" width="16" height="8" viewBox="0 0 16 8" ><path d="M0 1 H8 M0 4 H8 M0 7 H8" stroke="#e8e8e8" stroke-width="1.2"/><path d="M10 3 H14 L12 5Z" fill="#ccc"/></svg>
<div class="a" style="left:860px;top:168px;width:14px;height:15px;background:#3e3e3e;border:1px solid #383838;border-radius:2px"></div>
<svg style="left:860px;top:168px" width="14" height="15" viewBox="0 0 14 15" ><path d="M8.5 4 L5 7.5 L8.5 11" stroke="#ddd" fill="none" stroke-width="1.2"/></svg>
<div class="t" style="left:877px;top:168px;font-size:11px;letter-spacing:-0.164px;color:#eaeaea">Scratchpad</div>
<div class="a" style="left:859px;top:185px;width:162px;height:416px;background:#fff"></div>
<div class="a" style="left:875px;top:201px;width:131px;height:131px;border:1px dotted #e2e2e2"></div>
<svg style="left:871px;top:605px" width="14" height="14" viewBox="0 0 14 14" ><path d="M13 1.5 Q11.5 5 9 6.5 L7.5 5 Q9.5 2.5 13 1.5Z" fill="#eee"/><path d="M8 6 L6.5 7.5" stroke="#eee" stroke-width="1.5"/><path d="M1.5 13 Q2 9 5 8 Q7 8 7 10 Q6 12.5 1.5 13Z" fill="#eee"/></svg>
<svg style="left:913px;top:606px" width="12" height="12" viewBox="0 0 12 12"><defs><linearGradient id="sg"><stop offset="0" stop-color="#222"/><stop offset="1" stop-color="#eee"/></linearGradient></defs><rect x="0.5" y="0.5" width="11" height="11" fill="none" stroke="#ddd"/><rect x="2" y="2" width="8" height="8" fill="url(#sg)"/></svg>
<svg style="left:954px;top:606px" width="14" height="13" viewBox="0 0 14 13" ><path d="M4 1 L5.5 3" stroke="#eee" stroke-width="1.2"/><path d="M1 6 L6 2.5 L11 7 L6.5 11.5 Z" fill="#eee"/><path d="M2 6.5 H10" stroke="#444" stroke-width="1"/><path d="M12 8 Q13.5 10.5 12.5 12" stroke="#eee" fill="none" stroke-width="1.2"/></svg>
<svg style="left:996px;top:606px" width="12" height="13" viewBox="0 0 12 13" ><rect x="1.5" y="4" width="9" height="8.5" rx="1" fill="#eee"/><rect x="0.5" y="2" width="11" height="1.6" rx=".5" fill="#eee"/><rect x="3.5" y="0.5" width="5" height="1.6" fill="#eee"/><path d="M4 5.5 V11 M6 5.5 V11 M8 5.5 V11" stroke="#bbb" stroke-width=".6"/></svg>
</body></html>
